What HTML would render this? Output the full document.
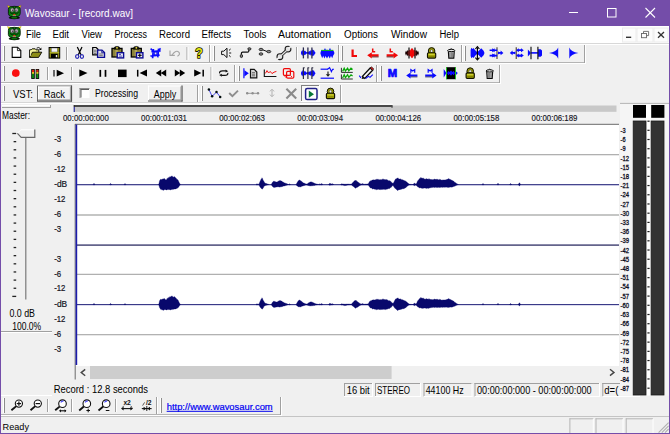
<!DOCTYPE html>
<html><head><meta charset="utf-8"><title>Wavosaur - [record.wav]</title>
<style>html,body{margin:0;padding:0;background:#f0f0f0;overflow:hidden}svg{display:block}text{font-family:"Liberation Sans",sans-serif;white-space:pre}</style></head>
<body>
<svg width="670" height="434" viewBox="0 0 670 434">
<rect x="0" y="0" width="670" height="434" fill="#744da9" />
<rect x="1" y="26" width="668" height="407" fill="#f0f0f0" />
<text x="25" y="16.5" font-size="10.1" fill="#fff" text-anchor="start" font-weight="normal" textLength="108" lengthAdjust="spacingAndGlyphs" >Wavosaur - [record.wav]</text>
<line x1="569" y1="12.5" x2="578" y2="12.5" stroke="#fff" stroke-width="1" />
<rect x="607.5" y="8.5" width="8.5" height="8.5" fill="none" stroke="#fff" stroke-width="1"/>
<line x1="645.5" y1="8" x2="655" y2="17.5" stroke="#fff" stroke-width="1.1" />
<line x1="655" y1="8" x2="645.5" y2="17.5" stroke="#fff" stroke-width="1.1" />
<rect x="1" y="26" width="668" height="17" fill="#fff" />
<line x1="1" y1="43.5" x2="669" y2="43.5" stroke="#d8d8d8" stroke-width="1" />
<text x="26" y="37.7" font-size="10" fill="#000" text-anchor="start" font-weight="normal" textLength="15" lengthAdjust="spacingAndGlyphs" >File</text>
<text x="52.5" y="37.7" font-size="10" fill="#000" text-anchor="start" font-weight="normal" textLength="16.5" lengthAdjust="spacingAndGlyphs" >Edit</text>
<text x="81.5" y="37.7" font-size="10" fill="#000" text-anchor="start" font-weight="normal" textLength="20.5" lengthAdjust="spacingAndGlyphs" >View</text>
<text x="114.5" y="37.7" font-size="10" fill="#000" text-anchor="start" font-weight="normal" textLength="32.5" lengthAdjust="spacingAndGlyphs" >Process</text>
<text x="159" y="37.7" font-size="10" fill="#000" text-anchor="start" font-weight="normal" textLength="31" lengthAdjust="spacingAndGlyphs" >Record</text>
<text x="201.5" y="37.7" font-size="10" fill="#000" text-anchor="start" font-weight="normal" textLength="29.5" lengthAdjust="spacingAndGlyphs" >Effects</text>
<text x="243.5" y="37.7" font-size="10" fill="#000" text-anchor="start" font-weight="normal" textLength="23" lengthAdjust="spacingAndGlyphs" >Tools</text>
<text x="278" y="37.7" font-size="10" fill="#000" text-anchor="start" font-weight="normal" textLength="53" lengthAdjust="spacingAndGlyphs" >Automation</text>
<text x="344" y="37.7" font-size="10" fill="#000" text-anchor="start" font-weight="normal" textLength="34" lengthAdjust="spacingAndGlyphs" >Options</text>
<text x="391" y="37.7" font-size="10" fill="#000" text-anchor="start" font-weight="normal" textLength="36" lengthAdjust="spacingAndGlyphs" >Window</text>
<text x="439.5" y="37.7" font-size="10" fill="#000" text-anchor="start" font-weight="normal" textLength="19.5" lengthAdjust="spacingAndGlyphs" >Help</text>
<rect x="622.5" y="28" width="13.5" height="14" fill="#fcfcfc" stroke="#ececec" stroke-width="1"/>
<rect x="637" y="28" width="16" height="14" fill="#fcfcfc" stroke="#ececec" stroke-width="1"/>
<rect x="654" y="28" width="14" height="14" fill="#fcfcfc" stroke="#ececec" stroke-width="1"/>
<line x1="626" y1="37.3" x2="631.2" y2="37.3" stroke="#333" stroke-width="1.4" />
<rect x="641.5" y="33.5" width="5" height="4.2" fill="none" stroke="#666" stroke-width=".9"/>
<path d="M643.5 33.3V31.4H648.6V35.6H646.8" fill="none" stroke="#666" stroke-width=".9"/>
<line x1="658" y1="32" x2="664" y2="37.8" stroke="#333" stroke-width="1.3" />
<line x1="664" y1="32" x2="658" y2="37.8" stroke="#333" stroke-width="1.3" />
<line x1="1" y1="44.5" x2="669" y2="44.5" stroke="#fff" stroke-width="1" />
<line x1="1" y1="62.5" x2="210" y2="62.5" stroke="#b4b4b4" stroke-width="1" />
<line x1="1" y1="63.5" x2="211" y2="63.5" stroke="#fff" stroke-width="1" />
<line x1="209.5" y1="45" x2="209.5" y2="63" stroke="#a0a0a0" stroke-width="1" />
<line x1="210.5" y1="45" x2="210.5" y2="63" stroke="#fff" stroke-width="1" />
<line x1="3.5" y1="46" x2="3.5" y2="61" stroke="#fff" stroke-width="1" />
<line x1="4.5" y1="46" x2="4.5" y2="61" stroke="#8c8c8c" stroke-width="1" />
<line x1="1" y1="62.5" x2="339" y2="62.5" stroke="#b4b4b4" stroke-width="1" />
<line x1="1" y1="63.5" x2="340" y2="63.5" stroke="#fff" stroke-width="1" />
<line x1="338.5" y1="45" x2="338.5" y2="63" stroke="#a0a0a0" stroke-width="1" />
<line x1="339.5" y1="45" x2="339.5" y2="63" stroke="#fff" stroke-width="1" />
<line x1="213.5" y1="46" x2="213.5" y2="61" stroke="#fff" stroke-width="1" />
<line x1="214.5" y1="46" x2="214.5" y2="61" stroke="#8c8c8c" stroke-width="1" />
<line x1="1" y1="62.5" x2="462" y2="62.5" stroke="#b4b4b4" stroke-width="1" />
<line x1="1" y1="63.5" x2="463" y2="63.5" stroke="#fff" stroke-width="1" />
<line x1="461.5" y1="45" x2="461.5" y2="63" stroke="#a0a0a0" stroke-width="1" />
<line x1="462.5" y1="45" x2="462.5" y2="63" stroke="#fff" stroke-width="1" />
<line x1="341.5" y1="46" x2="341.5" y2="61" stroke="#fff" stroke-width="1" />
<line x1="342.5" y1="46" x2="342.5" y2="61" stroke="#8c8c8c" stroke-width="1" />
<line x1="1" y1="62.5" x2="585" y2="62.5" stroke="#b4b4b4" stroke-width="1" />
<line x1="1" y1="63.5" x2="586" y2="63.5" stroke="#fff" stroke-width="1" />
<line x1="584.5" y1="45" x2="584.5" y2="63" stroke="#a0a0a0" stroke-width="1" />
<line x1="585.5" y1="45" x2="585.5" y2="63" stroke="#fff" stroke-width="1" />
<line x1="464.5" y1="46" x2="464.5" y2="61" stroke="#fff" stroke-width="1" />
<line x1="465.5" y1="46" x2="465.5" y2="61" stroke="#8c8c8c" stroke-width="1" />
<line x1="66.5" y1="47" x2="66.5" y2="60" stroke="#a0a0a0" stroke-width="1" />
<line x1="67.5" y1="47" x2="67.5" y2="60" stroke="#fff" stroke-width="1" />
<line x1="187" y1="47" x2="187" y2="60" stroke="#a0a0a0" stroke-width="1" />
<line x1="188" y1="47" x2="188" y2="60" stroke="#fff" stroke-width="1" />
<line x1="296.5" y1="47" x2="296.5" y2="60" stroke="#a0a0a0" stroke-width="1" />
<line x1="297.5" y1="47" x2="297.5" y2="60" stroke="#fff" stroke-width="1" />
<line x1="1" y1="82.5" x2="235" y2="82.5" stroke="#b4b4b4" stroke-width="1" />
<line x1="1" y1="83.5" x2="236" y2="83.5" stroke="#fff" stroke-width="1" />
<line x1="234.5" y1="65" x2="234.5" y2="83" stroke="#a0a0a0" stroke-width="1" />
<line x1="235.5" y1="65" x2="235.5" y2="83" stroke="#fff" stroke-width="1" />
<line x1="3.5" y1="66" x2="3.5" y2="81" stroke="#fff" stroke-width="1" />
<line x1="4.5" y1="66" x2="4.5" y2="81" stroke="#8c8c8c" stroke-width="1" />
<line x1="1" y1="82.5" x2="377" y2="82.5" stroke="#b4b4b4" stroke-width="1" />
<line x1="1" y1="83.5" x2="378" y2="83.5" stroke="#fff" stroke-width="1" />
<line x1="376.5" y1="65" x2="376.5" y2="83" stroke="#a0a0a0" stroke-width="1" />
<line x1="377.5" y1="65" x2="377.5" y2="83" stroke="#fff" stroke-width="1" />
<line x1="238.5" y1="66" x2="238.5" y2="81" stroke="#fff" stroke-width="1" />
<line x1="239.5" y1="66" x2="239.5" y2="81" stroke="#8c8c8c" stroke-width="1" />
<line x1="1" y1="82.5" x2="500" y2="82.5" stroke="#b4b4b4" stroke-width="1" />
<line x1="1" y1="83.5" x2="501" y2="83.5" stroke="#fff" stroke-width="1" />
<line x1="499.5" y1="65" x2="499.5" y2="83" stroke="#a0a0a0" stroke-width="1" />
<line x1="500.5" y1="65" x2="500.5" y2="83" stroke="#fff" stroke-width="1" />
<line x1="380.5" y1="66" x2="380.5" y2="81" stroke="#fff" stroke-width="1" />
<line x1="381.5" y1="66" x2="381.5" y2="81" stroke="#8c8c8c" stroke-width="1" />
<line x1="47.5" y1="67" x2="47.5" y2="80" stroke="#a0a0a0" stroke-width="1" />
<line x1="48.5" y1="67" x2="48.5" y2="80" stroke="#fff" stroke-width="1" />
<line x1="71.5" y1="67" x2="71.5" y2="80" stroke="#a0a0a0" stroke-width="1" />
<line x1="72.5" y1="67" x2="72.5" y2="80" stroke="#fff" stroke-width="1" />
<line x1="211" y1="67" x2="211" y2="80" stroke="#a0a0a0" stroke-width="1" />
<line x1="212" y1="67" x2="212" y2="80" stroke="#fff" stroke-width="1" />
<line x1="1" y1="102.5" x2="198" y2="102.5" stroke="#d6d6d6" stroke-width="1" />
<line x1="1" y1="103.5" x2="199" y2="103.5" stroke="#fff" stroke-width="1" />
<line x1="197.5" y1="85" x2="197.5" y2="103" stroke="#a0a0a0" stroke-width="1" />
<line x1="198.5" y1="85" x2="198.5" y2="103" stroke="#fff" stroke-width="1" />
<line x1="3.5" y1="86" x2="3.5" y2="101" stroke="#fff" stroke-width="1" />
<line x1="4.5" y1="86" x2="4.5" y2="101" stroke="#8c8c8c" stroke-width="1" />
<line x1="1" y1="102.5" x2="341" y2="102.5" stroke="#d6d6d6" stroke-width="1" />
<line x1="1" y1="103.5" x2="342" y2="103.5" stroke="#fff" stroke-width="1" />
<line x1="340.5" y1="85" x2="340.5" y2="103" stroke="#a0a0a0" stroke-width="1" />
<line x1="341.5" y1="85" x2="341.5" y2="103" stroke="#fff" stroke-width="1" />
<line x1="201.5" y1="86" x2="201.5" y2="101" stroke="#fff" stroke-width="1" />
<line x1="202.5" y1="86" x2="202.5" y2="101" stroke="#8c8c8c" stroke-width="1" />
<text x="13" y="97.7" font-size="10" fill="#000" text-anchor="start" font-weight="normal" textLength="20" lengthAdjust="spacingAndGlyphs" >VST:</text>
<rect x="37" y="85.5" width="35" height="16" fill="#f0f0f0" />
<rect x="37.5" y="86" width="34" height="15" fill="#f2f2f2" stroke="#6c6c6c" stroke-width="1"/>
<line x1="38" y1="87" x2="71" y2="87" stroke="#fff" stroke-width="1" />
<line x1="38.5" y1="86.5" x2="38.5" y2="100.5" stroke="#fff" stroke-width="1" />
<line x1="37" y1="101" x2="72" y2="101" stroke="#505050" stroke-width="1.2" />
<line x1="71.5" y1="85.5" x2="71.5" y2="101.5" stroke="#505050" stroke-width="1.2" />
<line x1="38" y1="99.9" x2="71" y2="99.9" stroke="#a0a0a0" stroke-width="1" />
<line x1="70.4" y1="86.5" x2="70.4" y2="100.5" stroke="#a0a0a0" stroke-width="1" />
<text x="43.8" y="97.5" font-size="10" fill="#000" text-anchor="start" font-weight="normal" textLength="21.2" lengthAdjust="spacingAndGlyphs" >Rack</text>
<rect x="79.5" y="88" width="10" height="10" fill="#fff" />
<line x1="79.5" y1="88.5" x2="89.5" y2="88.5" stroke="#8c8c8c" stroke-width="1" />
<line x1="80" y1="88" x2="80" y2="98" stroke="#8c8c8c" stroke-width="1" />
<line x1="80.5" y1="89.5" x2="89" y2="89.5" stroke="#5c5c5c" stroke-width="1" />
<line x1="81" y1="89" x2="81" y2="97.5" stroke="#5c5c5c" stroke-width="1" />
<text x="95" y="97.4" font-size="10" fill="#000" text-anchor="start" font-weight="normal" textLength="43" lengthAdjust="spacingAndGlyphs" >Processing</text>
<rect x="148" y="85.5" width="34.5" height="16" fill="#f0f0f0" />
<line x1="148" y1="86" x2="182.5" y2="86" stroke="#fff" stroke-width="1" />
<line x1="148.5" y1="85.5" x2="148.5" y2="101.5" stroke="#fff" stroke-width="1" />
<line x1="148" y1="101" x2="182.5" y2="101" stroke="#505050" stroke-width="1.2" />
<line x1="182" y1="85.5" x2="182" y2="101.5" stroke="#505050" stroke-width="1.2" />
<line x1="149" y1="99.9" x2="181.5" y2="99.9" stroke="#a0a0a0" stroke-width="1" />
<line x1="180.9" y1="86.5" x2="180.9" y2="100.5" stroke="#a0a0a0" stroke-width="1" />
<text x="153.8" y="97.5" font-size="10" fill="#000" text-anchor="start" font-weight="normal" textLength="22.4" lengthAdjust="spacingAndGlyphs" >Apply</text>
<rect x="301" y="85" width="19" height="17" fill="#f8f8f8" />
<line x1="301" y1="85.5" x2="320" y2="85.5" stroke="#808080" stroke-width="1" />
<line x1="301.5" y1="85" x2="301.5" y2="102" stroke="#808080" stroke-width="1" />
<line x1="301" y1="101.5" x2="320" y2="101.5" stroke="#fff" stroke-width="1" />
<line x1="319.5" y1="85" x2="319.5" y2="102" stroke="#fff" stroke-width="1" />
<line x1="2" y1="105.5" x2="50.5" y2="105.5" stroke="#fff" stroke-width="1" />
<line x1="2" y1="107.5" x2="50.5" y2="107.5" stroke="#a0a0a0" stroke-width="1" />
<line x1="50.5" y1="105" x2="50.5" y2="108" stroke="#a0a0a0" stroke-width="1" />
<text x="2" y="118.7" font-size="10" fill="#000" text-anchor="start" font-weight="normal" textLength="28" lengthAdjust="spacingAndGlyphs" >Master:</text>
<line x1="25.8" y1="137" x2="25.8" y2="299.5" stroke="#7a7a7a" stroke-width="1.2" />
<line x1="12.3" y1="133.5" x2="16.2" y2="133.5" stroke="#222" stroke-width="1.3" />
<line x1="13.6" y1="141.645" x2="16.2" y2="141.645" stroke="#222" stroke-width="1.3" />
<line x1="13.6" y1="149.79" x2="16.2" y2="149.79" stroke="#222" stroke-width="1.3" />
<line x1="13.6" y1="157.935" x2="16.2" y2="157.935" stroke="#222" stroke-width="1.3" />
<line x1="13.6" y1="166.08" x2="16.2" y2="166.08" stroke="#222" stroke-width="1.3" />
<line x1="13.6" y1="174.225" x2="16.2" y2="174.225" stroke="#222" stroke-width="1.3" />
<line x1="13.6" y1="182.37" x2="16.2" y2="182.37" stroke="#222" stroke-width="1.3" />
<line x1="13.6" y1="190.515" x2="16.2" y2="190.515" stroke="#222" stroke-width="1.3" />
<line x1="13.6" y1="198.66" x2="16.2" y2="198.66" stroke="#222" stroke-width="1.3" />
<line x1="13.6" y1="206.805" x2="16.2" y2="206.805" stroke="#222" stroke-width="1.3" />
<line x1="13.6" y1="214.95" x2="16.2" y2="214.95" stroke="#222" stroke-width="1.3" />
<line x1="13.6" y1="223.095" x2="16.2" y2="223.095" stroke="#222" stroke-width="1.3" />
<line x1="13.6" y1="231.24" x2="16.2" y2="231.24" stroke="#222" stroke-width="1.3" />
<line x1="13.6" y1="239.385" x2="16.2" y2="239.385" stroke="#222" stroke-width="1.3" />
<line x1="13.6" y1="247.53" x2="16.2" y2="247.53" stroke="#222" stroke-width="1.3" />
<line x1="13.6" y1="255.675" x2="16.2" y2="255.675" stroke="#222" stroke-width="1.3" />
<line x1="13.6" y1="263.82" x2="16.2" y2="263.82" stroke="#222" stroke-width="1.3" />
<line x1="13.6" y1="271.965" x2="16.2" y2="271.965" stroke="#222" stroke-width="1.3" />
<line x1="13.6" y1="280.11" x2="16.2" y2="280.11" stroke="#222" stroke-width="1.3" />
<line x1="13.6" y1="288.255" x2="16.2" y2="288.255" stroke="#222" stroke-width="1.3" />
<line x1="12.3" y1="296.4" x2="16.2" y2="296.4" stroke="#222" stroke-width="1.3" />
<path d="M17.2 133.2L21 129.6H34.8V137.4H21Z" fill="#f0f0f0"/>
<path d="M17.4 133.2L21 129.8H34" fill="none" stroke="#fff" stroke-width="1"/>
<path d="M17.4 133.4L21.2 137.3H34.8V129.4" fill="none" stroke="#666" stroke-width="1.2"/>
<text x="9.4" y="317.4" font-size="10.1" fill="#000" text-anchor="start" font-weight="normal" textLength="25.6" lengthAdjust="spacingAndGlyphs" >0.0 dB</text>
<text x="12.2" y="329.6" font-size="10.1" fill="#000" text-anchor="start" font-weight="normal" textLength="29" lengthAdjust="spacingAndGlyphs" >100.0%</text>
<line x1="1" y1="331.5" x2="52" y2="331.5" stroke="#a0a0a0" stroke-width="1" />
<line x1="1" y1="332.5" x2="52" y2="332.5" stroke="#fff" stroke-width="1" />
<rect x="74" y="105.5" width="542.5" height="6.3" fill="#c8c8c8" />
<line x1="74" y1="104.3" x2="392.7" y2="104.3" stroke="#fbfbfb" stroke-width="1.5" />
<line x1="74" y1="106" x2="392.5" y2="106" stroke="#484848" stroke-width="1.9" />
<line x1="74.3" y1="105" x2="74.3" y2="107" stroke="#333" stroke-width="1.4" />
<line x1="74.3" y1="107" x2="74.3" y2="112" stroke="#4444a4" stroke-width="1.4" />
<line x1="392" y1="105.5" x2="392" y2="108" stroke="#4a4a4a" stroke-width="1" />
<text x="63" y="121.4" font-size="8.9" fill="#16161e" text-anchor="start" font-weight="normal" textLength="45.8" lengthAdjust="spacingAndGlyphs" stroke="#16161e" stroke-width=".15">00:00:00:000</text>
<text x="141.1" y="121.4" font-size="8.9" fill="#16161e" text-anchor="start" font-weight="normal" textLength="45.8" lengthAdjust="spacingAndGlyphs" stroke="#16161e" stroke-width=".15">00:00:01:031</text>
<text x="219.2" y="121.4" font-size="8.9" fill="#16161e" text-anchor="start" font-weight="normal" textLength="45.8" lengthAdjust="spacingAndGlyphs" stroke="#16161e" stroke-width=".15">00:00:02:063</text>
<text x="297.3" y="121.4" font-size="8.9" fill="#16161e" text-anchor="start" font-weight="normal" textLength="45.8" lengthAdjust="spacingAndGlyphs" stroke="#16161e" stroke-width=".15">00:00:03:094</text>
<text x="375.4" y="121.4" font-size="8.9" fill="#16161e" text-anchor="start" font-weight="normal" textLength="45.8" lengthAdjust="spacingAndGlyphs" stroke="#16161e" stroke-width=".15">00:00:04:126</text>
<text x="453.5" y="121.4" font-size="8.9" fill="#16161e" text-anchor="start" font-weight="normal" textLength="45.8" lengthAdjust="spacingAndGlyphs" stroke="#16161e" stroke-width=".15">00:00:05:158</text>
<text x="531.6" y="121.4" font-size="8.9" fill="#16161e" text-anchor="start" font-weight="normal" textLength="45.8" lengthAdjust="spacingAndGlyphs" stroke="#16161e" stroke-width=".15">00:00:06:189</text>
<rect x="75" y="124" width="544" height="242" fill="#fff" />
<line x1="75" y1="124.4" x2="619" y2="124.4" stroke="#868686" stroke-width="1.2" />
<line x1="75.2" y1="124" x2="75.2" y2="379.5" stroke="#6a6a6a" stroke-width="1" />
<line x1="77" y1="154.5" x2="619" y2="154.5" stroke="#b0b0b0" stroke-width="1" />
<line x1="77" y1="155.5" x2="619" y2="155.5" stroke="#e8e8e8" stroke-width="1" />
<line x1="77" y1="215" x2="619" y2="215" stroke="#c5c6c5" stroke-width="2" />
<line x1="77" y1="273.5" x2="619" y2="273.5" stroke="#ebebeb" stroke-width="1" />
<line x1="77" y1="274.5" x2="619" y2="274.5" stroke="#b0b0b0" stroke-width="1" />
<line x1="77" y1="334.5" x2="619" y2="334.5" stroke="#b2b2b2" stroke-width="1" />
<line x1="77" y1="335.5" x2="619" y2="335.5" stroke="#e8e8e8" stroke-width="1" />
<line x1="77" y1="244.5" x2="619" y2="244.5" stroke="#8a8aaa" stroke-width="1" />
<line x1="77" y1="245.5" x2="619" y2="245.5" stroke="#64648a" stroke-width="1" />
<line x1="77" y1="184.5" x2="619" y2="184.5" stroke="#46468e" stroke-width="1"/><line x1="77" y1="185.5" x2="619" y2="185.5" stroke="#c6c6e2" stroke-width="1"/><path d="M93 184.5L93.5 183.9L94 183.3L94.5 183.9L95 184.5L95 184.5L94.5 184.7L94 184.8L93.5 184.7L93 184.5ZM109.5 184.5L110 184L110.5 183.4L111 183.8L111.5 184.4L112 184.5L112 184.5L111.5 184.5L111 184.7L110.5 184.8L110 184.6L109.5 184.5ZM124 184.5L124.5 184L125 183.5L125.5 184L126 184.5L126 184.5L125.5 184.7L125 184.8L124.5 184.7L124 184.5ZM158.5 184.5L159 183.4L159.5 181.1L160 180L160.5 179.3L161 179.6L161.5 179.5L162 179.3L162.5 179L163 179.2L163.5 178.7L164 178.8L164.5 178.6L165 179L165.5 179.8L166 179.9L166.5 179.7L167 178.4L167.5 178.2L168 178.4L168.5 177.4L169 177.6L169.5 177.2L170 176.5L170.5 177.1L171 176.6L171.5 176.3L172 175.8L172.5 176.6L173 177.1L173.5 177.3L174 176.5L174.5 176.7L175 177.2L175.5 177.7L176 177.9L176.5 178.7L177 179.5L177.5 179.6L178 180.1L178.5 181.1L179 182.3L179.5 183.1L180 183.9L180.5 184.5L180.5 184.5L180 185.1L179.5 185.8L179 186.4L178.5 187.3L178 187.5L177.5 188.2L177 188.3L176.5 188.5L176 189L175.5 188.9L175 189.1L174.5 188.9L174 189.2L173.5 189.3L173 189.3L172.5 189.6L172 189.2L171.5 189.4L171 190L170.5 189.8L170 190.1L169.5 189.6L169 189.8L168.5 189.6L168 189.6L167.5 189.6L167 190L166.5 189.9L166 190L165.5 189.5L165 189.7L164.5 189.6L164 190L163.5 190.4L163 189.7L162.5 190.2L162 189.5L161.5 189.6L161 189.5L160.5 189.2L160 188.3L159.5 187.6L159 185.6L158.5 184.5ZM256 184.5L256.5 184.1L257 183.7L257.5 184.1L258 184.5L258 184.5L257.5 184.8L257 185.1L256.5 184.8L256 184.5ZM258 184.5L258.5 184.2L259 183.9L259.5 182.7L260 181.5L260.5 180.4L261 179.2L261.5 178.9L262 177.7L262.5 178.4L263 179.9L263.5 180.8L264 181.6L264.5 182.5L265 183L265.5 183.3L266 183.5L266.5 183.6L267 183.8L267.5 184L268 184.2L268.5 184.3L269 184.5L269 184.5L268.5 184.6L268 184.8L267.5 184.9L267 185L266.5 185.2L266 185.3L265.5 185.5L265 185.8L264.5 186L264 186.3L263.5 187.6L263 188.3L262.5 188.9L262 189.2L261.5 188.4L261 188.2L260.5 187.4L260 187.1L259.5 185.9L259 185.1L258.5 184.8L258 184.5ZM271 184.5L271.5 184.2L272 183.1L272.5 182.2L273 181.9L273.5 181.2L274 181L274.5 181.4L275 181.5L275.5 181.7L276 182.1L276.5 182L277 181.9L277.5 181.7L278 181.4L278.5 181L279 180.9L279.5 180.6L280 180.8L280.5 180.6L281 181L281.5 181.1L282 181.2L282.5 181.7L283 182.2L283.5 182.3L284 182.4L284.5 182.9L285 183L285.5 183.2L286 183.4L286.5 183.6L287 183.8L287.5 184L288 184.3L288.5 184.5L288.5 184.5L288 184.7L287.5 184.9L287 185.1L286.5 185.2L286 185.4L285.5 185.6L285 185.7L284.5 185.9L284 185.9L283.5 186.1L283 186.2L282.5 186.5L282 186.8L281.5 186.7L281 186.8L280.5 186.8L280 187.2L279.5 187L279 186.9L278.5 186.8L278 186.9L277.5 186.8L277 187.1L276.5 187L276 187.1L275.5 187.3L275 187.2L274.5 187.4L274 187.5L273.5 187.3L273 186.9L272.5 186.4L272 185.9L271.5 184.7L271 184.5ZM288.5 184.5L289 184.2L289.5 183.8L290 184.2L290.5 184.5L290.5 184.5L290 184.7L289.5 184.8L289 184.7L288.5 184.5ZM296 184.5L296.5 183.7L297 182.8L297.5 182.1L298 181.2L298.5 180.7L299 179.9L299.5 180.1L300 180.5L300.5 180.6L301 181.1L301.5 181.3L302 181.7L302.5 182.1L303 182.7L303.5 183L304 183.1L304.5 183.3L305 183.6L305.5 183.8L306 183.9L306.5 183.9L307 184L307.5 183.7L308 183.3L308.5 182.9L309 182.6L309.5 182.4L310 182.1L310.5 182L311 181.8L311.5 181.9L312 182.2L312.5 182.3L313 182.6L313.5 182.8L314 183.1L314.5 183.3L315 183.5L315.5 183.7L316 183.8L316.5 184L317 184.1L317.5 184.2L318 184.3L318.5 184.4L319 184.5L319 184.5L318.5 184.6L318 184.7L317.5 184.7L317 184.8L316.5 184.9L316 185L315.5 185.1L315 185.2L314.5 185.4L314 185.5L313.5 185.6L313 185.6L312.5 185.7L312 185.7L311.5 185.8L311 185.8L310.5 185.9L310 185.8L309.5 185.8L309 185.7L308.5 185.5L308 185.4L307.5 185.2L307 185L306.5 185L306 185.1L305.5 185.1L305 185.2L304.5 185.4L304 185.6L303.5 185.7L303 185.9L302.5 186.1L302 186.3L301.5 186.6L301 186.5L300.5 186.9L300 186.9L299.5 186.8L299 186.8L298.5 186.9L298 186.4L297.5 186.1L297 185.9L296.5 185.2L296 184.5ZM319 184.5L319.5 183.8L320 183.9L320.5 184.2L321 184L321.5 183.6L322 183.8L322.5 184.2L323 184.5L323 184.5L322.5 184.6L322 184.8L321.5 184.9L321 184.8L320.5 184.7L320 184.8L319.5 184.8L319 184.5ZM328.5 184.5L329 184L329.5 183.4L330 183.2L330.5 183.6L331 184.1L331.5 183.9L332 183.7L332.5 183.7L333 184.1L333.5 184.4L334 184.5L334 184.5L333.5 184.5L333 184.7L332.5 184.8L332 184.8L331.5 184.9L331 184.9L330.5 185.1L330 185.3L329.5 185.2L329 184.8L328.5 184.5ZM340.5 184.5L341 184.2L341.5 183.8L342 183.9L342.5 183.9L343 184L343.5 184.1L344 184.1L344.5 184.2L345 184.2L345.5 184.2L346 184.2L346.5 184.2L347 184.1L347.5 184.1L348 184L348.5 184.1L349 184.1L349.5 184.2L350 184.2L350.5 184.2L351 184.1L351.5 184.1L352 183.5L352.5 182.8L353 182.3L353.5 181.9L354 181.2L354.5 180.7L355 180.5L355.5 180.6L356 180.3L356.5 180.7L357 181.4L357.5 181.7L358 181.9L358.5 182.5L359 182.8L359.5 183.2L360 183.5L360.5 183.8L361 184L361.5 183.9L362 183.8L362.5 183.6L363 183.8L363.5 184L364 184.2L364.5 184.2L365 184.2L365.5 184.1L366 184.1L366.5 184.1L367 184L367.5 184L368 183.8L368.5 183.4L369 182.6L369.5 181.6L370 181.5L370.5 180.7L371 180.8L371.5 180.8L372 179.9L372.5 180.1L373 180.1L373.5 179.7L374 180L374.5 179.9L375 179.8L375.5 179.8L376 179.5L376.5 179.3L377 179.4L377.5 179.3L378 179.2L378.5 179.4L379 179.8L379.5 179.8L380 179.4L380.5 179.7L381 179.4L381.5 179.7L382 179.5L382.5 179.1L383 179.4L383.5 179.1L384 179.4L384.5 179.5L385 179.6L385.5 179.7L386 179.5L386.5 179.5L387 179.9L387.5 179.8L388 180.5L388.5 180.7L389 180.8L389.5 180.6L390 181.2L390.5 181.2L391 181.5L391.5 182.2L392 182.7L392.5 183.1L393 183.6L393.5 182.7L394 182.1L394.5 180.8L395 180.1L395.5 179.1L396 178.7L396.5 178.9L397 177.9L397.5 178.3L398 177.8L398.5 178.7L399 179L399.5 179L400 179L400.5 178.8L401 179.6L401.5 179.4L402 179.9L402.5 179.6L403 180.2L403.5 180L404 180.6L404.5 180.8L405 180.8L405.5 181.1L406 181.5L406.5 181.7L407 182.3L407.5 182.8L408 183.1L408.5 183.5L409 183.9L409.5 184.1L410 184.2L410.5 184.3L411 184.3L411.5 184.4L412 184.4L412.5 184.5L413 184.3L413.5 184L414 183.4L414.5 183L415 183.6L415.5 183.9L416 183.7L416.5 183.4L417 182.5L417.5 181.1L418 180.5L418.5 179.9L419 179.3L419.5 178.6L420 178.8L420.5 177.7L421 177.4L421.5 177.9L422 178.2L422.5 178L423 178.5L423.5 178.2L424 178.6L424.5 179.1L425 179.2L425.5 179L426 179.2L426.5 178.5L427 179.1L427.5 179.1L428 179.3L428.5 179.2L429 178.6L429.5 179.3L430 179.3L430.5 179.6L431 179.2L431.5 179.5L432 179.7L432.5 179.6L433 179.7L433.5 179.5L434 179.2L434.5 179.1L435 179.2L435.5 179.5L436 179L436.5 179.2L437 179.8L437.5 179.2L438 179.3L438.5 179.9L439 179.6L439.5 179.4L440 179.6L440.5 179.6L441 180L441.5 180.1L442 180.2L442.5 179.9L443 179.9L443.5 180L444 179.8L444.5 180L445 180L445.5 179.8L446 180.1L446.5 179.5L447 179.3L447.5 179.3L448 179.1L448.5 178.7L449 178.6L449.5 179.4L450 179.1L450.5 179.6L451 180.2L451.5 180L452 180.3L452.5 180.6L453 181L453.5 181.1L454 181.4L454.5 182.2L455 182.2L455.5 182.7L456 183L456.5 183.4L457 183.7L457.5 184L458 184.4L458.5 184.5L458.5 184.5L458 184.6L457.5 184.8L457 185.1L456.5 185.3L456 185.6L455.5 185.8L455 186.1L454.5 186.2L454 186.6L453.5 186.5L453 186.7L452.5 187L452 187L451.5 187.2L451 187.1L450.5 187.1L450 187.2L449.5 187.2L449 187.2L448.5 187.4L448 187.4L447.5 187.3L447 187.5L446.5 187.1L446 187.2L445.5 187.2L445 187.1L444.5 187.3L444 187.4L443.5 187.1L443 187.4L442.5 187.3L442 187.4L441.5 187.2L441 187.1L440.5 187.4L440 187.5L439.5 187.4L439 187.4L438.5 187.3L438 187.4L437.5 187.4L437 187.5L436.5 187.4L436 187.2L435.5 187.3L435 187.5L434.5 187.4L434 187.4L433.5 187.3L433 187.2L432.5 187.5L432 187.5L431.5 187.6L431 187.7L430.5 187.7L430 187.7L429.5 188.1L429 188L428.5 188.4L428 188.2L427.5 188.3L427 188.1L426.5 188.4L426 188.4L425.5 188L425 188.3L424.5 187.9L424 188L423.5 188.2L423 188.2L422.5 188.4L422 188.1L421.5 188.3L421 188.1L420.5 187.8L420 187.9L419.5 187.9L419 187.5L418.5 187.2L418 187.1L417.5 186.8L417 186L416.5 185.4L416 185.2L415.5 185L415 185.3L414.5 185.8L414 185.5L413.5 184.9L413 184.7L412.5 184.5L412 184.6L411.5 184.6L411 184.6L410.5 184.7L410 184.7L409.5 184.8L409 184.9L408.5 185.3L408 185.7L407.5 186.1L407 186.5L406.5 186.9L406 187.2L405.5 187.9L405 187.9L404.5 188.4L404 188.6L403.5 188.7L403 189L402.5 188.8L402 188.7L401.5 189.3L401 189.6L400.5 189.2L400 189.9L399.5 189.4L399 190.1L398.5 189.7L398 190.4L397.5 190.5L397 189.9L396.5 189.4L396 189.3L395.5 188.5L395 188.4L394.5 187.7L394 186.9L393.5 186.2L393 185.3L392.5 185.8L392 186.3L391.5 187.1L391 187.5L390.5 187.5L390 188.3L389.5 188.6L389 188.6L388.5 188.5L388 188.9L387.5 188.7L387 189.4L386.5 188.9L386 189.5L385.5 189.6L385 189.3L384.5 189.4L384 189.3L383.5 189.3L383 189.6L382.5 189.4L382 189.2L381.5 189.5L381 189.7L380.5 189.6L380 189.6L379.5 189.5L379 189.8L378.5 189.3L378 189.1L377.5 189.5L377 189.7L376.5 189.7L376 189.3L375.5 189.6L375 189.1L374.5 189.2L374 188.9L373.5 188.7L373 189.1L372.5 189L372 188.6L371.5 188L371 188.1L370.5 187.9L370 187.5L369.5 187L369 186.1L368.5 185.3L368 185L367.5 184.9L367 184.9L366.5 184.8L366 184.8L365.5 184.8L365 184.8L364.5 184.8L364 184.8L363.5 184.8L363 184.8L362.5 184.8L362 184.8L361.5 184.9L361 184.9L360.5 185.2L360 185.5L359.5 185.8L359 186L358.5 186.5L358 186.7L357.5 187.2L357 187.5L356.5 187.6L356 188.1L355.5 188.2L355 187.9L354.5 187.3L354 187.2L353.5 186.5L353 186.2L352.5 186L352 185.3L351.5 184.8L351 184.8L350.5 184.7L350 184.7L349.5 184.8L349 184.8L348.5 184.8L348 184.9L347.5 185L347 185.2L346.5 185.3L346 185.4L345.5 185.5L345 185.5L344.5 185.6L344 185.4L343.5 185.2L343 185L342.5 185L342 185.1L341.5 185.1L341 184.8L340.5 184.5ZM482 184.5L482.5 183.9L483 183.4L483.5 183.9L484 184.5L484 184.5L483.5 184.7L483 184.8L482.5 184.7L482 184.5ZM497 184.5L497.5 183.8L498 183.2L498.5 183.8L499 184.5L499 184.5L498.5 184.7L498 184.8L497.5 184.7L497 184.5ZM509.5 184.5L510 184.1L510.5 183.5L511 183.8L511.5 184.4L512 184.5L512 184.5L511.5 184.5L511 184.7L510.5 184.8L510 184.6L509.5 184.5ZM518 184.5L518.5 184.3L519 183.2L519.5 182.7L520 183.6L520.5 184.5L520.5 184.5L520 185.2L519.5 186L519 185.6L518.5 184.7L518 184.5Z" fill="#08086c" stroke="#08086c" stroke-width="0.3" stroke-linejoin="round"/>
<line x1="77" y1="304.5" x2="619" y2="304.5" stroke="#3a3a88" stroke-width="1"/><line x1="77" y1="305.5" x2="619" y2="305.5" stroke="#dcdcee" stroke-width="1"/><path d="M93 304.5L93.5 303.9L94 303.3L94.5 303.9L95 304.5L95 304.5L94.5 304.6L94 304.8L93.5 304.6L93 304.5ZM109.5 304.5L110 304L110.5 303.4L111 303.8L111.5 304.4L112 304.5L112 304.5L111.5 304.5L111 304.7L110.5 304.8L110 304.6L109.5 304.5ZM124 304.5L124.5 304L125 303.5L125.5 304L126 304.5L126 304.5L125.5 304.6L125 304.8L124.5 304.6L124 304.5ZM158.5 304.5L159 303.4L159.5 301.1L160 300L160.5 299.3L161 299.6L161.5 299.5L162 299.3L162.5 299L163 299.2L163.5 298.7L164 298.8L164.5 298.6L165 299L165.5 299.8L166 299.9L166.5 299.7L167 298.4L167.5 298.2L168 298.4L168.5 297.4L169 297.6L169.5 297.2L170 296.5L170.5 297.1L171 296.6L171.5 296.3L172 295.8L172.5 296.6L173 297.1L173.5 297.3L174 296.5L174.5 296.7L175 297.2L175.5 297.7L176 297.9L176.5 298.7L177 299.5L177.5 299.6L178 300.1L178.5 301.1L179 302.3L179.5 303.1L180 303.9L180.5 304.5L180.5 304.5L180 305.1L179.5 305.8L179 306.4L178.5 307.3L178 307.5L177.5 308.2L177 308.3L176.5 308.5L176 309L175.5 308.9L175 309.1L174.5 308.9L174 309.2L173.5 309.3L173 309.3L172.5 309.6L172 309.2L171.5 309.4L171 310L170.5 309.8L170 310.1L169.5 309.6L169 309.8L168.5 309.6L168 309.6L167.5 309.6L167 310L166.5 309.9L166 310L165.5 309.5L165 309.7L164.5 309.6L164 310L163.5 310.4L163 309.7L162.5 310.2L162 309.5L161.5 309.6L161 309.5L160.5 309.2L160 308.3L159.5 307.6L159 305.6L158.5 304.5ZM256 304.5L256.5 304.1L257 303.7L257.5 304.1L258 304.5L258 304.5L257.5 304.8L257 305.1L256.5 304.8L256 304.5ZM258 304.5L258.5 304.2L259 303.9L259.5 302.7L260 301.5L260.5 300.4L261 299.2L261.5 298.9L262 297.7L262.5 298.4L263 299.9L263.5 300.8L264 301.6L264.5 302.5L265 303L265.5 303.3L266 303.5L266.5 303.6L267 303.8L267.5 304L268 304.1L268.5 304.3L269 304.5L269 304.5L268.5 304.6L268 304.8L267.5 304.9L267 305L266.5 305.2L266 305.3L265.5 305.5L265 305.8L264.5 306L264 306.3L263.5 307.6L263 308.3L262.5 308.9L262 309.2L261.5 308.4L261 308.2L260.5 307.4L260 307.1L259.5 305.9L259 305.1L258.5 304.8L258 304.5ZM271 304.5L271.5 304.2L272 303.1L272.5 302.2L273 301.9L273.5 301.2L274 301L274.5 301.4L275 301.5L275.5 301.7L276 302.1L276.5 302L277 301.9L277.5 301.7L278 301.4L278.5 301L279 300.9L279.5 300.6L280 300.8L280.5 300.6L281 301L281.5 301.1L282 301.2L282.5 301.7L283 302.2L283.5 302.3L284 302.4L284.5 302.9L285 303L285.5 303.2L286 303.4L286.5 303.6L287 303.8L287.5 304L288 304.3L288.5 304.5L288.5 304.5L288 304.7L287.5 304.9L287 305.1L286.5 305.2L286 305.4L285.5 305.6L285 305.7L284.5 305.9L284 305.9L283.5 306.1L283 306.2L282.5 306.5L282 306.8L281.5 306.7L281 306.8L280.5 306.8L280 307.2L279.5 307L279 306.9L278.5 306.8L278 306.9L277.5 306.8L277 307.1L276.5 307L276 307.1L275.5 307.3L275 307.2L274.5 307.4L274 307.5L273.5 307.3L273 306.9L272.5 306.4L272 305.9L271.5 304.7L271 304.5ZM288.5 304.5L289 304.1L289.5 303.8L290 304.1L290.5 304.5L290.5 304.5L290 304.6L289.5 304.8L289 304.6L288.5 304.5ZM296 304.5L296.5 303.7L297 302.8L297.5 302.1L298 301.2L298.5 300.7L299 299.9L299.5 300.1L300 300.5L300.5 300.6L301 301.1L301.5 301.3L302 301.7L302.5 302.1L303 302.7L303.5 303L304 303.1L304.5 303.4L305 303.6L305.5 303.8L306 303.9L306.5 303.9L307 304L307.5 303.7L308 303.3L308.5 302.9L309 302.6L309.5 302.4L310 302.1L310.5 302L311 301.8L311.5 301.9L312 302.2L312.5 302.3L313 302.6L313.5 302.8L314 303.1L314.5 303.3L315 303.5L315.5 303.7L316 303.8L316.5 304L317 304.1L317.5 304.2L318 304.3L318.5 304.4L319 304.5L319 304.5L318.5 304.6L318 304.6L317.5 304.7L317 304.8L316.5 304.9L316 305L315.5 305.1L315 305.2L314.5 305.4L314 305.5L313.5 305.6L313 305.6L312.5 305.7L312 305.7L311.5 305.8L311 305.8L310.5 305.9L310 305.8L309.5 305.8L309 305.7L308.5 305.5L308 305.4L307.5 305.2L307 305L306.5 305L306 305.1L305.5 305.1L305 305.2L304.5 305.4L304 305.6L303.5 305.7L303 305.9L302.5 306.1L302 306.3L301.5 306.6L301 306.5L300.5 306.9L300 306.9L299.5 306.8L299 306.8L298.5 306.9L298 306.4L297.5 306.1L297 305.9L296.5 305.2L296 304.5ZM319 304.5L319.5 303.8L320 303.9L320.5 304.2L321 304L321.5 303.6L322 303.8L322.5 304.2L323 304.5L323 304.5L322.5 304.6L322 304.8L321.5 304.9L321 304.8L320.5 304.7L320 304.8L319.5 304.8L319 304.5ZM328.5 304.5L329 304L329.5 303.4L330 303.2L330.5 303.6L331 304.1L331.5 303.9L332 303.7L332.5 303.7L333 304.1L333.5 304.4L334 304.5L334 304.5L333.5 304.5L333 304.6L332.5 304.8L332 304.8L331.5 304.9L331 304.9L330.5 305.1L330 305.3L329.5 305.2L329 304.8L328.5 304.5ZM340.5 304.5L341 304.1L341.5 303.8L342 303.9L342.5 303.9L343 304L343.5 304.1L344 304.1L344.5 304.2L345 304.2L345.5 304.2L346 304.2L346.5 304.1L347 304.1L347.5 304.1L348 304L348.5 304.1L349 304.1L349.5 304.1L350 304.2L350.5 304.2L351 304.1L351.5 304.1L352 303.5L352.5 302.8L353 302.3L353.5 301.9L354 301.2L354.5 300.7L355 300.5L355.5 300.6L356 300.3L356.5 300.7L357 301.4L357.5 301.7L358 301.9L358.5 302.5L359 302.8L359.5 303.2L360 303.5L360.5 303.8L361 304L361.5 303.9L362 303.8L362.5 303.6L363 303.8L363.5 304L364 304.2L364.5 304.2L365 304.1L365.5 304.1L366 304.1L366.5 304.1L367 304L367.5 304L368 303.8L368.5 303.4L369 302.6L369.5 301.6L370 301.5L370.5 300.7L371 300.8L371.5 300.8L372 299.9L372.5 300.1L373 300.1L373.5 299.7L374 300L374.5 299.9L375 299.8L375.5 299.8L376 299.5L376.5 299.3L377 299.4L377.5 299.3L378 299.2L378.5 299.4L379 299.8L379.5 299.8L380 299.4L380.5 299.7L381 299.4L381.5 299.7L382 299.5L382.5 299.1L383 299.4L383.5 299.1L384 299.4L384.5 299.5L385 299.6L385.5 299.7L386 299.5L386.5 299.5L387 299.9L387.5 299.8L388 300.5L388.5 300.7L389 300.8L389.5 300.6L390 301.2L390.5 301.2L391 301.5L391.5 302.2L392 302.7L392.5 303.1L393 303.6L393.5 302.7L394 302.1L394.5 300.8L395 300.1L395.5 299.1L396 298.7L396.5 298.9L397 297.9L397.5 298.3L398 297.8L398.5 298.7L399 299L399.5 299L400 299L400.5 298.8L401 299.6L401.5 299.4L402 299.9L402.5 299.6L403 300.2L403.5 300L404 300.6L404.5 300.8L405 300.8L405.5 301.1L406 301.5L406.5 301.7L407 302.3L407.5 302.8L408 303.1L408.5 303.5L409 303.9L409.5 304.1L410 304.2L410.5 304.3L411 304.3L411.5 304.4L412 304.4L412.5 304.5L413 304.3L413.5 304L414 303.4L414.5 303L415 303.6L415.5 303.9L416 303.6L416.5 303.4L417 302.5L417.5 301.1L418 300.5L418.5 299.9L419 299.3L419.5 298.6L420 298.8L420.5 297.7L421 297.4L421.5 297.9L422 298.2L422.5 298L423 298.5L423.5 298.2L424 298.6L424.5 299.1L425 299.2L425.5 299L426 299.2L426.5 298.5L427 299.1L427.5 299.1L428 299.3L428.5 299.2L429 298.6L429.5 299.3L430 299.3L430.5 299.6L431 299.2L431.5 299.5L432 299.7L432.5 299.6L433 299.7L433.5 299.5L434 299.2L434.5 299.1L435 299.2L435.5 299.5L436 299L436.5 299.2L437 299.8L437.5 299.2L438 299.3L438.5 299.9L439 299.6L439.5 299.4L440 299.6L440.5 299.6L441 300L441.5 300.1L442 300.2L442.5 299.9L443 299.9L443.5 300L444 299.8L444.5 300L445 300L445.5 299.8L446 300.1L446.5 299.5L447 299.3L447.5 299.3L448 299.1L448.5 298.7L449 298.6L449.5 299.4L450 299.1L450.5 299.6L451 300.2L451.5 300L452 300.3L452.5 300.6L453 301L453.5 301.1L454 301.4L454.5 302.2L455 302.2L455.5 302.7L456 303L456.5 303.4L457 303.7L457.5 304L458 304.4L458.5 304.5L458.5 304.5L458 304.6L457.5 304.8L457 305.1L456.5 305.3L456 305.6L455.5 305.8L455 306.1L454.5 306.2L454 306.6L453.5 306.5L453 306.7L452.5 307L452 307L451.5 307.2L451 307.1L450.5 307.1L450 307.2L449.5 307.2L449 307.2L448.5 307.4L448 307.4L447.5 307.3L447 307.5L446.5 307.1L446 307.2L445.5 307.2L445 307.1L444.5 307.3L444 307.4L443.5 307.1L443 307.4L442.5 307.3L442 307.4L441.5 307.2L441 307.1L440.5 307.4L440 307.5L439.5 307.4L439 307.4L438.5 307.3L438 307.4L437.5 307.4L437 307.5L436.5 307.4L436 307.2L435.5 307.3L435 307.5L434.5 307.4L434 307.4L433.5 307.3L433 307.2L432.5 307.5L432 307.5L431.5 307.6L431 307.7L430.5 307.7L430 307.7L429.5 308.1L429 308L428.5 308.4L428 308.2L427.5 308.3L427 308.1L426.5 308.4L426 308.4L425.5 308L425 308.3L424.5 307.9L424 308L423.5 308.2L423 308.2L422.5 308.4L422 308.1L421.5 308.3L421 308.1L420.5 307.8L420 307.9L419.5 307.9L419 307.5L418.5 307.2L418 307.1L417.5 306.8L417 306L416.5 305.4L416 305.2L415.5 304.9L415 305.3L414.5 305.8L414 305.5L413.5 304.9L413 304.6L412.5 304.5L412 304.6L411.5 304.6L411 304.6L410.5 304.7L410 304.7L409.5 304.8L409 304.9L408.5 305.3L408 305.7L407.5 306.1L407 306.5L406.5 306.9L406 307.2L405.5 307.9L405 307.9L404.5 308.4L404 308.6L403.5 308.7L403 309L402.5 308.8L402 308.7L401.5 309.3L401 309.6L400.5 309.2L400 309.9L399.5 309.4L399 310.1L398.5 309.7L398 310.4L397.5 310.5L397 309.9L396.5 309.4L396 309.3L395.5 308.5L395 308.4L394.5 307.7L394 306.9L393.5 306.2L393 305.3L392.5 305.8L392 306.3L391.5 307.1L391 307.5L390.5 307.5L390 308.3L389.5 308.6L389 308.6L388.5 308.5L388 308.9L387.5 308.7L387 309.4L386.5 308.9L386 309.5L385.5 309.6L385 309.3L384.5 309.4L384 309.3L383.5 309.3L383 309.6L382.5 309.4L382 309.2L381.5 309.5L381 309.7L380.5 309.6L380 309.6L379.5 309.5L379 309.8L378.5 309.3L378 309.1L377.5 309.5L377 309.7L376.5 309.7L376 309.3L375.5 309.6L375 309.1L374.5 309.2L374 308.9L373.5 308.7L373 309.1L372.5 309L372 308.6L371.5 308L371 308.1L370.5 307.9L370 307.5L369.5 307L369 306.1L368.5 305.3L368 305L367.5 304.9L367 304.9L366.5 304.8L366 304.8L365.5 304.8L365 304.8L364.5 304.8L364 304.8L363.5 304.8L363 304.8L362.5 304.8L362 304.8L361.5 304.9L361 304.9L360.5 305.2L360 305.5L359.5 305.8L359 306L358.5 306.5L358 306.7L357.5 307.2L357 307.5L356.5 307.6L356 308.1L355.5 308.2L355 307.9L354.5 307.3L354 307.2L353.5 306.5L353 306.2L352.5 306L352 305.3L351.5 304.8L351 304.8L350.5 304.7L350 304.7L349.5 304.8L349 304.8L348.5 304.9L348 304.9L347.5 305L347 305.1L346.5 305.3L346 305.4L345.5 305.5L345 305.5L344.5 305.6L344 305.4L343.5 305.2L343 305L342.5 305L342 305.1L341.5 305.1L341 304.8L340.5 304.5ZM482 304.5L482.5 303.9L483 303.4L483.5 303.9L484 304.5L484 304.5L483.5 304.6L483 304.8L482.5 304.6L482 304.5ZM497 304.5L497.5 303.9L498 303.2L498.5 303.9L499 304.5L499 304.5L498.5 304.6L498 304.8L497.5 304.6L497 304.5ZM509.5 304.5L510 304.1L510.5 303.5L511 303.8L511.5 304.4L512 304.5L512 304.5L511.5 304.5L511 304.7L510.5 304.8L510 304.6L509.5 304.5ZM518 304.5L518.5 304.3L519 303.2L519.5 302.7L520 303.6L520.5 304.5L520.5 304.5L520 305.2L519.5 306L519 305.6L518.5 304.7L518 304.5Z" fill="#08086c" stroke="#08086c" stroke-width="0.3" stroke-linejoin="round"/>
<line x1="76.4" y1="124.5" x2="76.4" y2="365" stroke="#1c1cac" stroke-width="1.6" />
<text x="54.2" y="141.9" font-size="8.2" fill="#14141e" text-anchor="start" font-weight="normal" textLength="7" lengthAdjust="spacingAndGlyphs" stroke="#14141e" stroke-width=".2">-3</text>
<text x="54.2" y="156.6" font-size="8.2" fill="#14141e" text-anchor="start" font-weight="normal" textLength="7" lengthAdjust="spacingAndGlyphs" stroke="#14141e" stroke-width=".2">-6</text>
<text x="54.2" y="171.5" font-size="8.2" fill="#14141e" text-anchor="start" font-weight="normal" textLength="11.2" lengthAdjust="spacingAndGlyphs" stroke="#14141e" stroke-width=".2">-12</text>
<text x="54.2" y="186.9" font-size="8.2" fill="#14141e" text-anchor="start" font-weight="normal" textLength="13" lengthAdjust="spacingAndGlyphs" stroke="#14141e" stroke-width=".2">-dB</text>
<text x="54.2" y="202" font-size="8.2" fill="#14141e" text-anchor="start" font-weight="normal" textLength="11.2" lengthAdjust="spacingAndGlyphs" stroke="#14141e" stroke-width=".2">-12</text>
<text x="54.2" y="216.8" font-size="8.2" fill="#14141e" text-anchor="start" font-weight="normal" textLength="7" lengthAdjust="spacingAndGlyphs" stroke="#14141e" stroke-width=".2">-6</text>
<text x="54.2" y="232" font-size="8.2" fill="#14141e" text-anchor="start" font-weight="normal" textLength="7" lengthAdjust="spacingAndGlyphs" stroke="#14141e" stroke-width=".2">-3</text>
<text x="54.2" y="261.8" font-size="8.2" fill="#14141e" text-anchor="start" font-weight="normal" textLength="7" lengthAdjust="spacingAndGlyphs" stroke="#14141e" stroke-width=".2">-3</text>
<text x="54.2" y="276.5" font-size="8.2" fill="#14141e" text-anchor="start" font-weight="normal" textLength="7" lengthAdjust="spacingAndGlyphs" stroke="#14141e" stroke-width=".2">-6</text>
<text x="54.2" y="291.4" font-size="8.2" fill="#14141e" text-anchor="start" font-weight="normal" textLength="11.2" lengthAdjust="spacingAndGlyphs" stroke="#14141e" stroke-width=".2">-12</text>
<text x="54.2" y="306.8" font-size="8.2" fill="#14141e" text-anchor="start" font-weight="normal" textLength="13" lengthAdjust="spacingAndGlyphs" stroke="#14141e" stroke-width=".2">-dB</text>
<text x="54.2" y="321.9" font-size="8.2" fill="#14141e" text-anchor="start" font-weight="normal" textLength="11.2" lengthAdjust="spacingAndGlyphs" stroke="#14141e" stroke-width=".2">-12</text>
<text x="54.2" y="336.7" font-size="8.2" fill="#14141e" text-anchor="start" font-weight="normal" textLength="7" lengthAdjust="spacingAndGlyphs" stroke="#14141e" stroke-width=".2">-6</text>
<text x="54.2" y="351.9" font-size="8.2" fill="#14141e" text-anchor="start" font-weight="normal" textLength="7" lengthAdjust="spacingAndGlyphs" stroke="#14141e" stroke-width=".2">-3</text>
<rect x="76" y="366" width="543" height="13" fill="#f0f0f0" />
<rect x="90" y="366" width="301.6" height="13" fill="#cdcdcd" />
<path d="M85.2 369.4L81.2 372.6L85.2 375.8" fill="none" stroke="#444" stroke-width="1.4"/>
<path d="M610 369.2L614 372.4L610 375.6" fill="none" stroke="#444" stroke-width="1.4"/>
<text x="53.7" y="393.4" font-size="10" fill="#000" text-anchor="start" font-weight="normal" textLength="94.3" lengthAdjust="spacingAndGlyphs" >Record : 12.8 seconds</text>
<line x1="344" y1="383.5" x2="373" y2="383.5" stroke="#a0a0a0" stroke-width="1" />
<line x1="344.5" y1="383" x2="344.5" y2="397" stroke="#a0a0a0" stroke-width="1" />
<line x1="344" y1="396.5" x2="373" y2="396.5" stroke="#fff" stroke-width="1" />
<line x1="372.5" y1="383" x2="372.5" y2="397" stroke="#fff" stroke-width="1" />
<text x="346.7" y="393.9" font-size="10.1" fill="#000" text-anchor="start" font-weight="normal" textLength="23" lengthAdjust="spacingAndGlyphs" >16 bit</text>
<line x1="375" y1="383.5" x2="421" y2="383.5" stroke="#a0a0a0" stroke-width="1" />
<line x1="375.5" y1="383" x2="375.5" y2="397" stroke="#a0a0a0" stroke-width="1" />
<line x1="375" y1="396.5" x2="421" y2="396.5" stroke="#fff" stroke-width="1" />
<line x1="420.5" y1="383" x2="420.5" y2="397" stroke="#fff" stroke-width="1" />
<text x="377" y="393.9" font-size="10.1" fill="#000" text-anchor="start" font-weight="normal" textLength="33" lengthAdjust="spacingAndGlyphs" >STEREO</text>
<line x1="423.5" y1="383.5" x2="472.5" y2="383.5" stroke="#a0a0a0" stroke-width="1" />
<line x1="424" y1="383" x2="424" y2="397" stroke="#a0a0a0" stroke-width="1" />
<line x1="423.5" y1="396.5" x2="472.5" y2="396.5" stroke="#fff" stroke-width="1" />
<line x1="472" y1="383" x2="472" y2="397" stroke="#fff" stroke-width="1" />
<text x="425.7" y="393.9" font-size="10.1" fill="#000" text-anchor="start" font-weight="normal" textLength="38" lengthAdjust="spacingAndGlyphs" >44100 Hz</text>
<line x1="474.5" y1="383.5" x2="600" y2="383.5" stroke="#a0a0a0" stroke-width="1" />
<line x1="475" y1="383" x2="475" y2="397" stroke="#a0a0a0" stroke-width="1" />
<line x1="474.5" y1="396.5" x2="600" y2="396.5" stroke="#fff" stroke-width="1" />
<line x1="599.5" y1="383" x2="599.5" y2="397" stroke="#fff" stroke-width="1" />
<text x="477" y="393.9" font-size="10.1" fill="#000" text-anchor="start" font-weight="normal" textLength="114.6" lengthAdjust="spacingAndGlyphs" >00:00:00:000 - 00:00:00:000</text>
<line x1="602.3" y1="383.5" x2="640" y2="383.5" stroke="#a0a0a0" stroke-width="1" />
<line x1="602.8" y1="383" x2="602.8" y2="397" stroke="#a0a0a0" stroke-width="1" />
<line x1="602.3" y1="396.5" x2="640" y2="396.5" stroke="#fff" stroke-width="1" />
<line x1="639.5" y1="383" x2="639.5" y2="397" stroke="#fff" stroke-width="1" />
<text x="604.3" y="393.9" font-size="10.1" fill="#000" text-anchor="start" font-weight="normal" textLength="14" lengthAdjust="spacingAndGlyphs" >d=(</text>
<rect x="620" y="103" width="49" height="292.5" fill="#f5f5f5" />
<line x1="620" y1="103.4" x2="669" y2="103.4" stroke="#b4b4b4" stroke-width="1" />
<rect x="646" y="104" width="5" height="291.4" fill="#fff" />
<rect x="633" y="105" width="13" height="12.8" fill="#000" />
<rect x="651.2" y="105" width="13.2" height="12.8" fill="#000" />
<rect x="633.2" y="121" width="12.8" height="274" fill="#333" stroke="#1a1a1a" stroke-width=".8"/>
<rect x="651.1" y="121" width="12.9" height="274" fill="#333" stroke="#1a1a1a" stroke-width=".8"/>
<text x="620.6" y="132.9" font-size="7.2" fill="#0c0c20" text-anchor="start" font-weight="normal" textLength="5" lengthAdjust="spacingAndGlyphs" stroke="#0c0c20" stroke-width=".3">-3</text>
<rect x="647.4" y="129.7" width="2.2" height="1.2" fill="#1c1c1c" />
<text x="620.6" y="142.11" font-size="7.2" fill="#0c0c20" text-anchor="start" font-weight="normal" textLength="5" lengthAdjust="spacingAndGlyphs" stroke="#0c0c20" stroke-width=".3">-6</text>
<rect x="647.4" y="138.91" width="2.2" height="1.2" fill="#1c1c1c" />
<text x="620.6" y="151.32" font-size="7.2" fill="#0c0c20" text-anchor="start" font-weight="normal" textLength="5" lengthAdjust="spacingAndGlyphs" stroke="#0c0c20" stroke-width=".3">-9</text>
<rect x="647.4" y="148.12" width="2.2" height="1.2" fill="#1c1c1c" />
<text x="620.6" y="160.53" font-size="7.2" fill="#0c0c20" text-anchor="start" font-weight="normal" textLength="8.5" lengthAdjust="spacingAndGlyphs" stroke="#0c0c20" stroke-width=".3">-12</text>
<rect x="647.4" y="157.33" width="2.2" height="1.2" fill="#1c1c1c" />
<text x="620.6" y="169.74" font-size="7.2" fill="#0c0c20" text-anchor="start" font-weight="normal" textLength="8.5" lengthAdjust="spacingAndGlyphs" stroke="#0c0c20" stroke-width=".3">-15</text>
<rect x="647.4" y="166.54" width="2.2" height="1.2" fill="#1c1c1c" />
<text x="620.6" y="178.95" font-size="7.2" fill="#0c0c20" text-anchor="start" font-weight="normal" textLength="8.5" lengthAdjust="spacingAndGlyphs" stroke="#0c0c20" stroke-width=".3">-18</text>
<rect x="647.4" y="175.75" width="2.2" height="1.2" fill="#1c1c1c" />
<text x="620.6" y="188.16" font-size="7.2" fill="#0c0c20" text-anchor="start" font-weight="normal" textLength="8.5" lengthAdjust="spacingAndGlyphs" stroke="#0c0c20" stroke-width=".3">-21</text>
<rect x="647.4" y="184.96" width="2.2" height="1.2" fill="#1c1c1c" />
<text x="620.6" y="197.37" font-size="7.2" fill="#0c0c20" text-anchor="start" font-weight="normal" textLength="8.5" lengthAdjust="spacingAndGlyphs" stroke="#0c0c20" stroke-width=".3">-24</text>
<rect x="647.4" y="194.17" width="2.2" height="1.2" fill="#1c1c1c" />
<text x="620.6" y="206.58" font-size="7.2" fill="#0c0c20" text-anchor="start" font-weight="normal" textLength="8.5" lengthAdjust="spacingAndGlyphs" stroke="#0c0c20" stroke-width=".3">-27</text>
<rect x="647.4" y="203.38" width="2.2" height="1.2" fill="#1c1c1c" />
<text x="620.6" y="215.79" font-size="7.2" fill="#0c0c20" text-anchor="start" font-weight="normal" textLength="8.5" lengthAdjust="spacingAndGlyphs" stroke="#0c0c20" stroke-width=".3">-30</text>
<rect x="647.4" y="212.59" width="2.2" height="1.2" fill="#1c1c1c" />
<text x="620.6" y="225" font-size="7.2" fill="#0c0c20" text-anchor="start" font-weight="normal" textLength="8.5" lengthAdjust="spacingAndGlyphs" stroke="#0c0c20" stroke-width=".3">-33</text>
<rect x="647.4" y="221.8" width="2.2" height="1.2" fill="#1c1c1c" />
<text x="620.6" y="234.21" font-size="7.2" fill="#0c0c20" text-anchor="start" font-weight="normal" textLength="8.5" lengthAdjust="spacingAndGlyphs" stroke="#0c0c20" stroke-width=".3">-36</text>
<rect x="647.4" y="231.01" width="2.2" height="1.2" fill="#1c1c1c" />
<text x="620.6" y="243.42" font-size="7.2" fill="#0c0c20" text-anchor="start" font-weight="normal" textLength="8.5" lengthAdjust="spacingAndGlyphs" stroke="#0c0c20" stroke-width=".3">-39</text>
<rect x="647.4" y="240.22" width="2.2" height="1.2" fill="#1c1c1c" />
<text x="620.6" y="252.63" font-size="7.2" fill="#0c0c20" text-anchor="start" font-weight="normal" textLength="8.5" lengthAdjust="spacingAndGlyphs" stroke="#0c0c20" stroke-width=".3">-42</text>
<rect x="647.4" y="249.43" width="2.2" height="1.2" fill="#1c1c1c" />
<text x="620.6" y="261.84" font-size="7.2" fill="#0c0c20" text-anchor="start" font-weight="normal" textLength="8.5" lengthAdjust="spacingAndGlyphs" stroke="#0c0c20" stroke-width=".3">-45</text>
<rect x="647.4" y="258.64" width="2.2" height="1.2" fill="#1c1c1c" />
<text x="620.6" y="271.05" font-size="7.2" fill="#0c0c20" text-anchor="start" font-weight="normal" textLength="8.5" lengthAdjust="spacingAndGlyphs" stroke="#0c0c20" stroke-width=".3">-48</text>
<rect x="647.4" y="267.85" width="2.2" height="1.2" fill="#1c1c1c" />
<text x="620.6" y="280.26" font-size="7.2" fill="#0c0c20" text-anchor="start" font-weight="normal" textLength="8.5" lengthAdjust="spacingAndGlyphs" stroke="#0c0c20" stroke-width=".3">-51</text>
<rect x="647.4" y="277.06" width="2.2" height="1.2" fill="#1c1c1c" />
<text x="620.6" y="289.47" font-size="7.2" fill="#0c0c20" text-anchor="start" font-weight="normal" textLength="8.5" lengthAdjust="spacingAndGlyphs" stroke="#0c0c20" stroke-width=".3">-54</text>
<rect x="647.4" y="286.27" width="2.2" height="1.2" fill="#1c1c1c" />
<text x="620.6" y="298.68" font-size="7.2" fill="#0c0c20" text-anchor="start" font-weight="normal" textLength="8.5" lengthAdjust="spacingAndGlyphs" stroke="#0c0c20" stroke-width=".3">-57</text>
<rect x="647.4" y="295.48" width="2.2" height="1.2" fill="#1c1c1c" />
<text x="620.6" y="307.89" font-size="7.2" fill="#0c0c20" text-anchor="start" font-weight="normal" textLength="8.5" lengthAdjust="spacingAndGlyphs" stroke="#0c0c20" stroke-width=".3">-60</text>
<rect x="647.4" y="304.69" width="2.2" height="1.2" fill="#1c1c1c" />
<text x="620.6" y="317.1" font-size="7.2" fill="#0c0c20" text-anchor="start" font-weight="normal" textLength="8.5" lengthAdjust="spacingAndGlyphs" stroke="#0c0c20" stroke-width=".3">-63</text>
<rect x="647.4" y="313.9" width="2.2" height="1.2" fill="#1c1c1c" />
<text x="620.6" y="326.31" font-size="7.2" fill="#0c0c20" text-anchor="start" font-weight="normal" textLength="8.5" lengthAdjust="spacingAndGlyphs" stroke="#0c0c20" stroke-width=".3">-66</text>
<rect x="647.4" y="323.11" width="2.2" height="1.2" fill="#1c1c1c" />
<text x="620.6" y="335.52" font-size="7.2" fill="#0c0c20" text-anchor="start" font-weight="normal" textLength="8.5" lengthAdjust="spacingAndGlyphs" stroke="#0c0c20" stroke-width=".3">-69</text>
<rect x="647.4" y="332.32" width="2.2" height="1.2" fill="#1c1c1c" />
<text x="620.6" y="344.73" font-size="7.2" fill="#0c0c20" text-anchor="start" font-weight="normal" textLength="8.5" lengthAdjust="spacingAndGlyphs" stroke="#0c0c20" stroke-width=".3">-72</text>
<rect x="647.4" y="341.53" width="2.2" height="1.2" fill="#1c1c1c" />
<text x="620.6" y="353.94" font-size="7.2" fill="#0c0c20" text-anchor="start" font-weight="normal" textLength="8.5" lengthAdjust="spacingAndGlyphs" stroke="#0c0c20" stroke-width=".3">-75</text>
<rect x="647.4" y="350.74" width="2.2" height="1.2" fill="#1c1c1c" />
<text x="620.6" y="363.15" font-size="7.2" fill="#0c0c20" text-anchor="start" font-weight="normal" textLength="8.5" lengthAdjust="spacingAndGlyphs" stroke="#0c0c20" stroke-width=".3">-78</text>
<rect x="647.4" y="359.95" width="2.2" height="1.2" fill="#1c1c1c" />
<text x="620.6" y="372.36" font-size="7.2" fill="#0c0c20" text-anchor="start" font-weight="normal" textLength="8.5" lengthAdjust="spacingAndGlyphs" stroke="#0c0c20" stroke-width=".3">-81</text>
<rect x="647.4" y="369.16" width="2.2" height="1.2" fill="#1c1c1c" />
<text x="620.6" y="381.57" font-size="7.2" fill="#0c0c20" text-anchor="start" font-weight="normal" textLength="8.5" lengthAdjust="spacingAndGlyphs" stroke="#0c0c20" stroke-width=".3">-84</text>
<rect x="647.4" y="378.37" width="2.2" height="1.2" fill="#1c1c1c" />
<text x="620.6" y="390.78" font-size="7.2" fill="#0c0c20" text-anchor="start" font-weight="normal" textLength="8.5" lengthAdjust="spacingAndGlyphs" stroke="#0c0c20" stroke-width=".3">-87</text>
<rect x="647.4" y="387.58" width="2.2" height="1.2" fill="#1c1c1c" />
<rect x="647.4" y="120.6" width="2.2" height="1.2" fill="#1c1c1c" />
<line x1="1" y1="395.5" x2="52" y2="395.5" stroke="#fff" stroke-width="1" />
<line x1="1" y1="414.5" x2="157" y2="414.5" stroke="#b4b4b4" stroke-width="1" />
<line x1="1" y1="415.5" x2="158" y2="415.5" stroke="#fff" stroke-width="1" />
<line x1="156.5" y1="397" x2="156.5" y2="415" stroke="#a0a0a0" stroke-width="1" />
<line x1="157.5" y1="397" x2="157.5" y2="415" stroke="#fff" stroke-width="1" />
<line x1="3.5" y1="398" x2="3.5" y2="413" stroke="#fff" stroke-width="1" />
<line x1="4.5" y1="398" x2="4.5" y2="413" stroke="#8c8c8c" stroke-width="1" />
<line x1="1" y1="414.5" x2="281" y2="414.5" stroke="#b4b4b4" stroke-width="1" />
<line x1="1" y1="415.5" x2="282" y2="415.5" stroke="#fff" stroke-width="1" />
<line x1="280.5" y1="397" x2="280.5" y2="415" stroke="#a0a0a0" stroke-width="1" />
<line x1="281.5" y1="397" x2="281.5" y2="415" stroke="#fff" stroke-width="1" />
<line x1="160.5" y1="398" x2="160.5" y2="413" stroke="#fff" stroke-width="1" />
<line x1="161.5" y1="398" x2="161.5" y2="413" stroke="#8c8c8c" stroke-width="1" />
<line x1="47.5" y1="399" x2="47.5" y2="412" stroke="#a0a0a0" stroke-width="1" />
<line x1="48.5" y1="399" x2="48.5" y2="412" stroke="#fff" stroke-width="1" />
<line x1="71.5" y1="399" x2="71.5" y2="412" stroke="#a0a0a0" stroke-width="1" />
<line x1="72.5" y1="399" x2="72.5" y2="412" stroke="#fff" stroke-width="1" />
<line x1="115.5" y1="399" x2="115.5" y2="412" stroke="#a0a0a0" stroke-width="1" />
<line x1="116.5" y1="399" x2="116.5" y2="412" stroke="#fff" stroke-width="1" />
<text x="166.7" y="409.7" font-size="9.8" fill="#0000f0" text-anchor="start" font-weight="normal" textLength="106" lengthAdjust="spacingAndGlyphs" stroke="#0000f0" stroke-width=".2">http://www.wavosaur.com</text>
<line x1="166.7" y1="411.3" x2="272.8" y2="411.3" stroke="#0000ee" stroke-width="1" />
<line x1="1" y1="416.5" x2="669" y2="416.5" stroke="#c4c4c4" stroke-width="1" />
<text x="2.6" y="429.5" font-size="9.7" fill="#000" text-anchor="start" font-weight="normal" textLength="26.4" lengthAdjust="spacingAndGlyphs" >Ready</text>
<line x1="569.5" y1="418.8" x2="593.3" y2="418.8" stroke="#b4b4b4" stroke-width="1" />
<line x1="569.9" y1="418.4" x2="569.9" y2="433" stroke="#b4b4b4" stroke-width="1" />
<line x1="593.3" y1="418.8" x2="593.3" y2="433" stroke="#fff" stroke-width="1" />
<line x1="595.6" y1="418.8" x2="623" y2="418.8" stroke="#b4b4b4" stroke-width="1" />
<line x1="596" y1="418.4" x2="596" y2="433" stroke="#b4b4b4" stroke-width="1" />
<line x1="623" y1="418.8" x2="623" y2="433" stroke="#fff" stroke-width="1" />
<line x1="625.8" y1="418.8" x2="653" y2="418.8" stroke="#b4b4b4" stroke-width="1" />
<line x1="626.2" y1="418.4" x2="626.2" y2="433" stroke="#b4b4b4" stroke-width="1" />
<line x1="653" y1="418.8" x2="653" y2="433" stroke="#fff" stroke-width="1" />
<line x1="665" y1="432.6" x2="668.6" y2="429" stroke="#b0b0b0" stroke-width="1.1" />
<line x1="661.8" y1="432.6" x2="668.6" y2="425.8" stroke="#b0b0b0" stroke-width="1.1" />
<line x1="658.6" y1="432.6" x2="668.6" y2="422.6" stroke="#b0b0b0" stroke-width="1.1" />
<g transform="translate(7.8 5.6)">
<path d="M-0.4 -0.2L2.8 0.8L1.6 4Z" fill="#f8e808" stroke="#806000" stroke-width="0.3" />
<path d="M13.4 -0.2L10.2 0.8L11.4 4Z" fill="#f8e808" stroke="#806000" stroke-width="0.3" />
<ellipse cx="6.5" cy="12.2" rx="5.6" ry="1.4" fill="#041404" stroke="none" stroke-width="1"/>
<ellipse cx="6.5" cy="12.1" rx="3.2" ry="0.9" fill="#0a740a" stroke="none" stroke-width="1"/>
<path d="M2.2 1.2Q6.5 0.2 10.8 1.2Q12.5 1.7 12.4 4V8Q12.3 10.2 10 10.9H3Q0.7 10.2 0.6 8V4Q0.5 1.7 2.2 1.2Z" fill="#0a800e" stroke="#031c03" stroke-width="0.9" />
<path d="M2.2 6.8L4.4 8.2L6.5 7L8.6 8.2L10.8 6.8" fill="none" stroke="#032803" stroke-width="1" />
<path d="M5.2 1.4L6.5 3.6L7.8 1.4" fill="none" stroke="#032003" stroke-width="0.9" />
<ellipse cx="4.4" cy="4.4" rx="1.9" ry="2.1" fill="#b8acb8" stroke="#1c241c" stroke-width="0.5"/>
<ellipse cx="8.6" cy="4.4" rx="1.9" ry="2.1" fill="#b8acb8" stroke="#1c241c" stroke-width="0.5"/>
<ellipse cx="4.9" cy="5" rx="0.7" ry="1" fill="#4a444a" stroke="none" stroke-width="1"/>
<ellipse cx="8.1" cy="5" rx="0.7" ry="1" fill="#4a444a" stroke="none" stroke-width="1"/>
<path d="M4.9 9.7Q6.5 7.2 8.1 9.7Z" fill="#ff1414" stroke="none" stroke-width="1" />
<line x1="4.7" y1="10.1" x2="8.3" y2="10.1" stroke="#e8c4c4" stroke-width="0.6" />
</g>
<g transform="translate(7.8 26.6)">
<path d="M-0.4 -0.2L2.8 0.8L1.6 4Z" fill="#f8e808" stroke="#806000" stroke-width="0.3" />
<path d="M13.4 -0.2L10.2 0.8L11.4 4Z" fill="#f8e808" stroke="#806000" stroke-width="0.3" />
<ellipse cx="6.5" cy="12.2" rx="5.6" ry="1.4" fill="#041404" stroke="none" stroke-width="1"/>
<ellipse cx="6.5" cy="12.1" rx="3.2" ry="0.9" fill="#0a740a" stroke="none" stroke-width="1"/>
<path d="M2.2 1.2Q6.5 0.2 10.8 1.2Q12.5 1.7 12.4 4V8Q12.3 10.2 10 10.9H3Q0.7 10.2 0.6 8V4Q0.5 1.7 2.2 1.2Z" fill="#0a800e" stroke="#031c03" stroke-width="0.9" />
<path d="M2.2 6.8L4.4 8.2L6.5 7L8.6 8.2L10.8 6.8" fill="none" stroke="#032803" stroke-width="1" />
<path d="M5.2 1.4L6.5 3.6L7.8 1.4" fill="none" stroke="#032003" stroke-width="0.9" />
<ellipse cx="4.4" cy="4.4" rx="1.9" ry="2.1" fill="#b8acb8" stroke="#1c241c" stroke-width="0.5"/>
<ellipse cx="8.6" cy="4.4" rx="1.9" ry="2.1" fill="#b8acb8" stroke="#1c241c" stroke-width="0.5"/>
<ellipse cx="4.9" cy="5" rx="0.7" ry="1" fill="#4a444a" stroke="none" stroke-width="1"/>
<ellipse cx="8.1" cy="5" rx="0.7" ry="1" fill="#4a444a" stroke="none" stroke-width="1"/>
<path d="M4.9 9.7Q6.5 7.2 8.1 9.7Z" fill="#ff1414" stroke="none" stroke-width="1" />
<line x1="4.7" y1="10.1" x2="8.3" y2="10.1" stroke="#e8c4c4" stroke-width="0.6" />
</g>
<path d="M12.2 47.2H17.6L20.8 50.4V57.4H12.2Z" fill="#fff" stroke="#000" stroke-width="1.1" />
<path d="M17.4 47.4V50.6H20.6" fill="none" stroke="#000" stroke-width="0.8" />
<path d="M29.6 57.4V49.8H31.2L32.2 48.8H35.2L36 49.8H38.8V52" fill="#e6e67a" stroke="#000" stroke-width="0.9" />
<path d="M29.6 57.4L32.6 52.2H41.8L38.6 57.4Z" fill="#8c8c14" stroke="#000" stroke-width="0.9" />
<path d="M30.6 56V50.8H35.6" fill="none" stroke="#ffffc0" stroke-width="0.8" />
<path d="M36.6 48.2Q38.8 46.6 40.4 48.6" fill="none" stroke="#000" stroke-width="0.9" />
<path d="M41.4 47.6V50H39Z" fill="#000" stroke="none" stroke-width="1" />
<rect x="49.1" y="47.5" width="10.6" height="10.6" fill="#8a8a10" stroke="#000" stroke-width="1" />
<rect x="51.2" y="48" width="6.2" height="4" fill="#f4f4f4" stroke="#404040" stroke-width="0.4" />
<rect x="51" y="53.8" width="6.8" height="4.2" fill="#000" stroke="none" stroke-width="1" />
<rect x="55.8" y="55" width="1.4" height="2.2" fill="#e8e8e8" stroke="none" stroke-width="1" />
<line x1="49.8" y1="52.6" x2="59.2" y2="52.6" stroke="#c8c83c" stroke-width="0.7" />
<path d="M77.3 46.9L81 54.8M82 46.9L78.3 54.8" fill="none" stroke="#000" stroke-width="1.25" />
<ellipse cx="77.2" cy="56.5" rx="1.6" ry="1.9" fill="none" stroke="#2424b4" stroke-width="1.2"/>
<ellipse cx="81.9" cy="56.5" rx="1.6" ry="1.9" fill="none" stroke="#2424b4" stroke-width="1.2"/>
<path d="M92.7 47.5H96.2L98 49.3V54.9H92.7Z" fill="#e4e4e4" stroke="#000" stroke-width="1.2" />
<line x1="94" y1="50.2" x2="96.6" y2="50.2" stroke="#505050" stroke-width="0.8" />
<line x1="94" y1="51.8" x2="96.6" y2="51.8" stroke="#505050" stroke-width="0.8" />
<line x1="94" y1="53.4" x2="96.6" y2="53.4" stroke="#505050" stroke-width="0.8" />
<path d="M97.6 50.1H102L104.5 52.5V57.4H97.6Z" fill="#e0e0ea" stroke="#0c0c94" stroke-width="1.4" />
<path d="M101.8 50.4V52.8H104.2" fill="none" stroke="#0c0c94" stroke-width="0.9" />
<line x1="99.2" y1="54" x2="102.8" y2="54" stroke="#606068" stroke-width="0.9" />
<line x1="99.2" y1="55.7" x2="102.8" y2="55.7" stroke="#606068" stroke-width="0.9" />
<rect x="112" y="48.4" width="10" height="8.6" fill="#8a8238" stroke="#000" stroke-width="1.3" />
<rect x="115.4" y="49.8" width="2.4" height="6.4" fill="#b4aa5c" stroke="none" stroke-width="1" />
<path d="M114.2 49.2V48Q114.2 46.4 117 46.4Q119.8 46.4 119.8 48V49.2Z" fill="#181808" stroke="#000" stroke-width="0.6" />
<circle cx="117" cy="47.8" r="0.9" fill="#f0e040" stroke="none" stroke-width="1"/>
<rect x="117.2" y="52.7" width="6.4" height="5.2" fill="#f4f4fa" stroke="#0c0c94" stroke-width="1.4" />
<line x1="118.8" y1="54.4" x2="121" y2="54.4" stroke="#3030a0" stroke-width="0.9" />
<line x1="118.8" y1="56.1" x2="122.2" y2="56.1" stroke="#3030a0" stroke-width="0.9" />
<rect x="131.3" y="48.4" width="10" height="8.6" fill="#8a8238" stroke="#000" stroke-width="1.3" />
<rect x="134.7" y="49.8" width="2.4" height="6.4" fill="#b4aa5c" stroke="none" stroke-width="1" />
<path d="M133.5 49.2V48Q133.5 46.4 136.3 46.4Q139.1 46.4 139.1 48V49.2Z" fill="#181808" stroke="#000" stroke-width="0.6" />
<circle cx="136.3" cy="47.8" r="0.9" fill="#f0e040" stroke="none" stroke-width="1"/>
<rect x="136.5" y="52.7" width="6.4" height="5.2" fill="#f4f4fa" stroke="#0c0c94" stroke-width="1.4" />
<line x1="137.9" y1="55.3" x2="141.7" y2="55.3" stroke="#000" stroke-width="1.1" />
<line x1="139.8" y1="53.5" x2="139.8" y2="57.1" stroke="#000" stroke-width="1.1" />
<path d="M153.4 49L152.6 58.2M158.6 48.6L157.8 57.4M150.4 56L159.6 55.2M151.4 51.6L160.6 50.8" fill="none" stroke="#0a0aff" stroke-width="1.7" />
<path d="M150.6 48.6L153.2 51M160.6 48.4L158.4 50.6" fill="none" stroke="#0a0aff" stroke-width="1.5" />
<rect x="153.6" y="51.6" width="4" height="3.6" fill="#0a0aff" stroke="none" stroke-width="1" />
<circle cx="155.6" cy="53.4" r="1.05" fill="#e8e8f8" stroke="#3030c0" stroke-width="0.4"/>
<path d="M172 55Q176 49.2 179 52.4Q180.4 54.6 177.4 56.2" fill="none" stroke="#a4a4a4" stroke-width="1.1" />
<path d="M170 50.6V55.4H174.8" fill="none" stroke="#a4a4a4" stroke-width="1.1" />
<text x="195.3" y="57.6" font-size="14" fill="#e4e410" font-weight="bold" textLength="7.6" lengthAdjust="spacingAndGlyphs" stroke="#141400" stroke-width="1.7" paint-order="stroke" stroke-linejoin="round">?</text>
<path d="M221.6 51.2H223.8L227 48.2V57.6L223.8 54.6H221.6Z" fill="#f0f0f0" stroke="#111" stroke-width="1" />
<path d="M229 50.4L230.6 49M229.2 53H231.2M229 55.4L230.6 56.8" fill="none" stroke="#111" stroke-width="1" />
<path d="M241.4 54.6V53.2Q241.4 52.2 242.6 52.2H247.6Q248.8 52.2 248.8 51V50" fill="none" stroke="#111" stroke-width="1.2" />
<ellipse cx="241.4" cy="56" rx="1.2" ry="1.6" fill="#808080" stroke="#111" stroke-width="0.8"/>
<ellipse cx="249.4" cy="48.9" rx="1.6" ry="1.2" fill="#808080" stroke="#111" stroke-width="0.8"/>
<line x1="262" y1="49.6" x2="267.4" y2="51.6" stroke="#111" stroke-width="1" />
<ellipse cx="261" cy="49.5" rx="1.9" ry="1.2" fill="#909090" stroke="#111" stroke-width="0.8"/>
<ellipse cx="261" cy="54" rx="1.9" ry="1.2" fill="#909090" stroke="#111" stroke-width="0.8"/>
<ellipse cx="268.8" cy="51.6" rx="2" ry="1.2" fill="#909090" stroke="#111" stroke-width="0.8"/>
<path d="M281.2 55.4L286.6 50.4" fill="none" stroke="#1c1c1c" stroke-width="3" />
<circle cx="279.9" cy="56.7" r="2.9" fill="#e2e2e2" stroke="#1c1c1c" stroke-width="1.1"/>
<circle cx="288" cy="49.1" r="2.9" fill="#e2e2e2" stroke="#1c1c1c" stroke-width="1.1"/>
<path d="M281.2 55.4L286.6 50.4" fill="none" stroke="#e2e2e2" stroke-width="1.3" />
<path d="M276.6 59.6L279.4 57.1" fill="none" stroke="#f0f0f0" stroke-width="1.8" />
<path d="M291.3 46.2L288.5 48.7" fill="none" stroke="#f0f0f0" stroke-width="1.8" />
<path d="M301 52.6L301.5 50.5L302 51.5L302.6 49.7L303.2 50.9L303.8 50.1L304.4 51.1L305.2 50.7L306 51.8L306.8 52.2L307.6 51.7L308.4 51.9L309.2 50.9L310 51.5L310.8 50.1L311.6 51.1L312.4 49.3L313.2 50.5L313.8 49.7L314.6 51.5L315.4 52.6L315.4 53.2L314.6 54.3L313.8 56.1L313.2 55.3L312.4 56.5L311.6 54.7L310.8 55.7L310 54.3L309.2 54.9L308.4 53.9L307.6 54.1L306.8 53.6L306 54L305.2 55.1L304.4 54.7L303.8 55.7L303.2 54.9L302.6 56.1L302 54.3L301.5 55.3L301 53.2Z" fill="#0a0aff" stroke="none" stroke-width="1" />
<line x1="303.4" y1="47.4" x2="303.4" y2="58.4" stroke="#2a2a50" stroke-width="1.3" />
<line x1="307.9" y1="47.4" x2="307.9" y2="58.4" stroke="#2a2a50" stroke-width="1.3" />
<line x1="311.9" y1="47.4" x2="311.9" y2="58.4" stroke="#2a2a50" stroke-width="1.3" />
<path d="M320.5 52.6L321.2 50.6L322 49.8L323 50.4L324 50L325 48L326 50.2L327 49.6L328 50.3L329 49.9L330 47.8L331 50.2L332 49.7L333 50.4L333.8 51.2L334.3 52.6L334.3 53.8L333.2 55.6L332.2 58.2L331 55.8L329.8 58.5L328.4 56L327 58.6L325.6 56L324.4 58.5L323.2 55.8L322.2 58.2L321.2 55.8L320.5 53.8Z" fill="#0a0aff" stroke="none" stroke-width="1" />
<line x1="321.2" y1="50.4" x2="333.4" y2="50.4" stroke="#10c010" stroke-width="1" />
<path d="M352.6 49.4V56H357" fill="none" stroke="#f00808" stroke-width="2.2" />
<path d="M367.2 55.3L371.8 52.2V54.2H378.59999999999997V56.4H371.8V58.4Z" fill="#f00808" stroke="none" stroke-width="1" />
<line x1="372" y1="56.9" x2="378.6" y2="56.9" stroke="#400000" stroke-width="0.8" />
<path d="M372.7 48.4V51.8H375.2" fill="none" stroke="#f00808" stroke-width="1.5" />
<path d="M398.1 55.3L393.5 52.2V54.2H386.6V56.4H393.5V58.4Z" fill="#f00808" stroke="none" stroke-width="1" />
<line x1="386.6" y1="56.9" x2="393.3" y2="56.9" stroke="#400000" stroke-width="0.8" />
<path d="M390.3 48.4V51.8H392.8" fill="none" stroke="#f00808" stroke-width="1.5" />
<path d="M405.2 52.7L406 50.5L406.8 52.1L407.6 49.9L408.6 51.5L409.4 50.7L412 50.9L414.6 50.7L415.4 51.5L416.4 49.9L417.2 52.1L418 50.5L418.8 52.7L418.8 53.5L418 55.7L417.2 54.1L416.4 56.3L415.4 54.7L414.6 55.5L412 55.3L409.4 55.5L408.6 54.7L407.6 56.3L406.8 54.1L406 55.7L405.2 53.5Z" fill="#180000" stroke="none" stroke-width="1" />
<path d="M407.8 52.6L409 49.7L410.2 50.5L411 48.9L412 48L413 48.9L413.8 50.5L415 49.7L416.2 52.6L416.2 53.6L415 56.5L413.8 55.7L413 57.3L412 58.2L411 57.3L410.2 55.7L409 56.5L407.8 53.6Z" fill="#f00808" stroke="none" stroke-width="1" />
<line x1="409" y1="47.6" x2="409" y2="58.6" stroke="#202020" stroke-width="1.3" />
<line x1="415" y1="47.6" x2="415" y2="58.6" stroke="#202020" stroke-width="1.3" />
<g transform="translate(426.9 47.4)">
<ellipse cx="4.7" cy="3.6" rx="3.3" ry="3.4" fill="#98980a" stroke="#121200" stroke-width="1"/>
<ellipse cx="4.7" cy="3.7" rx="1.25" ry="1.5" fill="#e4e4f0" stroke="#3a3a00" stroke-width="0.5"/>
<rect x="0.6" y="5.3" width="8.2" height="5.4" fill="#a8a806" stroke="#101000" stroke-width="1.15" rx="1"/>
<line x1="1.6" y1="7" x2="7.8" y2="7" stroke="#dcdc48" stroke-width="0.8" />
<line x1="1.6" y1="9" x2="7.8" y2="9" stroke="#747400" stroke-width="0.8" />
</g>
<g transform="translate(447.2 48.2)">
<path d="M1.1 2.6H7.1L6.6 9.9H1.6Z" fill="#d4d4d4" stroke="#080808" stroke-width="1.1" />
<path d="M0.4 2.5Q0.4 1.1 4.1 1.1Q7.8 1.1 7.8 2.5Q7.8 3.4 4.1 3.4Q0.4 3.4 0.4 2.5Z" fill="#e8e8e8" stroke="#101010" stroke-width="1" />
<path d="M3 1.1Q4.1 0 5.2 1.1" fill="none" stroke="#1a1a1a" stroke-width="0.8" />
<line x1="2.7" y1="4" x2="2.7" y2="9.4" stroke="#484848" stroke-width="0.7" />
<line x1="4.1" y1="4" x2="4.1" y2="9.4" stroke="#484848" stroke-width="0.7" />
<line x1="5.5" y1="4" x2="5.5" y2="9.4" stroke="#484848" stroke-width="0.7" />
</g>
<path d="M470.6 50L471.4 47.7L472.6 49L473.6 48.1L475 50L476.4 51.4L477.4 52L478.6 51L480 49.6L481.2 48.3L482.4 49.4L483.4 50.6L484.3 52.2L484.3 53.8L483.4 55.4L482.4 56.6L481.2 57.7L480 56.4L478.6 55L477.4 54L476.4 54.6L475 56L473.6 57.9L472.6 57L471.4 58.3L470.6 56Z" fill="#0a0aff" stroke="none" stroke-width="1" />
<line x1="477.4" y1="47.6" x2="477.4" y2="59" stroke="#000" stroke-width="1.2" />
<path d="M475.4 49L477.4 46.6L479.4 49M475.4 57.6L477.4 60L479.4 57.6" fill="none" stroke="#000" stroke-width="1.1" />
<line x1="497" y1="47.2" x2="497" y2="59" stroke="#6c6458" stroke-width="1.4" />
<path d="M489.59999999999997 49.400000000000006H492.2V48.220000000000006L495.0 50.2L492.2 52.18V51.0H489.59999999999997Z" fill="#0a0aff" stroke="none" stroke-width="1" />
<path d="M489.59999999999997 54.800000000000004H492.2V53.620000000000005L495.0 55.6L492.2 57.58V56.4H489.59999999999997Z" fill="#0a0aff" stroke="none" stroke-width="1" />
<path d="M497.20000000000005 49.400000000000006H494.6V48.220000000000006L491.8 50.2L494.6 52.18V51.0H497.20000000000005Z" fill="#0a0aff" stroke="none" stroke-width="1" />
<path d="M497.20000000000005 54.800000000000004H494.6V53.620000000000005L491.8 55.6L494.6 57.58V56.4H497.20000000000005Z" fill="#0a0aff" stroke="none" stroke-width="1" />
<path d="M498.0 52.1H500.6V50.48L503.40000000000003 52.9L500.6 55.32V53.699999999999996H498.0Z" fill="#0a0aff" stroke="none" stroke-width="1" />
<path d="M498 51.2V54.6L500 52.9Z" fill="#0a0aff" stroke="none" stroke-width="1" />
<line x1="516.3" y1="47.2" x2="516.3" y2="59" stroke="#6c6458" stroke-width="1.4" />
<path d="M518.4 49.400000000000006H521V48.220000000000006L523.8 50.2L521 52.18V51.0H518.4Z" fill="#0a0aff" stroke="none" stroke-width="1" />
<path d="M518.4 54.800000000000004H521V53.620000000000005L523.8 55.6L521 57.58V56.4H518.4Z" fill="#0a0aff" stroke="none" stroke-width="1" />
<path d="M521.4 49.400000000000006H518.8V48.220000000000006L516.0 50.2L518.8 52.18V51.0H521.4Z" fill="#0a0aff" stroke="none" stroke-width="1" />
<path d="M521.4 54.800000000000004H518.8V53.620000000000005L516.0 55.6L518.8 57.58V56.4H521.4Z" fill="#0a0aff" stroke="none" stroke-width="1" />
<path d="M515.2 52.1H512.6V50.48L509.8 52.9L512.6 55.32V53.699999999999996H515.2Z" fill="#0a0aff" stroke="none" stroke-width="1" />
<path d="M515.3 51.2V54.6L513.3 52.9Z" fill="#0a0aff" stroke="none" stroke-width="1" />
<path d="M527.9 49.4L531 52.9L527.9 56.6Z" fill="#0a0aff" stroke="none" stroke-width="1" />
<line x1="531" y1="52.9" x2="538" y2="52.9" stroke="#0a0aff" stroke-width="1.6" />
<path d="M538 49.2H540.6L542 50.4V55.6L540.6 56.8H538Z" fill="#0a0aff" stroke="none" stroke-width="1" />
<line x1="531" y1="46.8" x2="531" y2="59.2" stroke="#1a1a1a" stroke-width="1.2" />
<line x1="537.9" y1="46.8" x2="537.9" y2="59.2" stroke="#1a1a1a" stroke-width="1.2" />
<path d="M558.2 47.6Q556.6 52 549 53.1Q556.6 54.2 558.2 58.7Z" fill="#0a0aff" stroke="none" stroke-width="1" />
<path d="M569.3 47.6Q570.8 52 578.4 53.1Q570.8 54.2 569.3 58.7Z" fill="#0a0aff" stroke="none" stroke-width="1" />
<circle cx="15.8" cy="73.1" r="3.85" fill="#fa1010" stroke="none" stroke-width="1"/>
<rect x="31.7" y="69.5" width="2.6" height="9" fill="#0c9410" stroke="#080808" stroke-width="0.9" />
<rect x="32" y="69.8" width="2" height="2.2" fill="#e02010" stroke="none" stroke-width="1" />
<rect x="32" y="72" width="2" height="1.8" fill="#e8c020" stroke="none" stroke-width="1" />
<rect x="36.1" y="69.5" width="2.6" height="9" fill="#0c9410" stroke="#080808" stroke-width="0.9" />
<rect x="36.4" y="69.8" width="2" height="2.2" fill="#e02010" stroke="none" stroke-width="1" />
<rect x="36.4" y="72" width="2" height="1.8" fill="#e8c020" stroke="none" stroke-width="1" />
<line x1="54" y1="70" x2="54" y2="76.6" stroke="#3c3c3c" stroke-width="1.5" />
<path d="M56.7 69.8L64 73.2L56.7 76.6Z" fill="#000" stroke="none" stroke-width="1" />
<path d="M79.3 69.4L87.5 73.1L79.3 76.8Z" fill="#000" stroke="none" stroke-width="1" />
<line x1="100.3" y1="69.9" x2="100.3" y2="76.8" stroke="#000" stroke-width="1.7" />
<line x1="105.5" y1="69.9" x2="105.5" y2="76.8" stroke="#000" stroke-width="1.7" />
<rect x="118" y="69.6" width="8.6" height="7.5" fill="#000" stroke="none" stroke-width="1" />
<line x1="137.7" y1="69.8" x2="137.7" y2="76.6" stroke="#000" stroke-width="1.5" />
<path d="M147 69.6L139.6 73.1L147 76.6Z" fill="#000" stroke="none" stroke-width="1" />
<path d="M161.2 69.6L155.8 73.1L161.2 76.6ZM166.2 69.6L160.8 73.1L166.2 76.6Z" fill="#000" stroke="none" stroke-width="1" />
<path d="M174.8 69.6L180.2 73.1L174.8 76.6ZM179.8 69.6L185.2 73.1L179.8 76.6Z" fill="#000" stroke="none" stroke-width="1" />
<path d="M194.2 69.6L201.4 73.1L194.2 76.6Z" fill="#000" stroke="none" stroke-width="1" />
<line x1="203.2" y1="69.8" x2="203.2" y2="76.6" stroke="#000" stroke-width="1.5" />
<path d="M219.6 73.4Q219.2 70.8 222.6 70.8H226" fill="none" stroke="#111" stroke-width="1.2" />
<path d="M227.8 72.8Q228.2 75.4 224.8 75.4H221.4" fill="none" stroke="#111" stroke-width="1.2" />
<path d="M225.6 69.4L228.2 71.2L225.6 72.4Z" fill="#111" stroke="none" stroke-width="1" />
<path d="M221.8 73.8L219.2 75.1L221.8 76.8Z" fill="#111" stroke="none" stroke-width="1" />
<path d="M243.9 68.2V78.2" fill="none" stroke="#0a0aff" stroke-width="1.2" />
<path d="M244.4 70.2L248.8 73.3L244.4 76.4Z" fill="#0a0aff" stroke="none" stroke-width="1" />
<path d="M250.5 69.4H254.2L256.8 72V77.9H250.5Z" fill="#d4d4d4" stroke="#111" stroke-width="1.2" />
<line x1="252" y1="72.6" x2="255" y2="72.6" stroke="#555" stroke-width="0.8" />
<line x1="252" y1="74.2" x2="255" y2="74.2" stroke="#555" stroke-width="0.8" />
<line x1="252" y1="75.8" x2="255" y2="75.8" stroke="#555" stroke-width="0.8" />
<path d="M264.3 69.4V76.5H276.4" fill="none" stroke="#111" stroke-width="1.1" />
<path d="M265.4 73.4L267 70.6L268.6 73L270.2 71.4L272 73.6L274 72.2L276.4 71.4" fill="none" stroke="#f01010" stroke-width="1" />
<rect x="283.4" y="68.6" width="7" height="6.8" fill="none" stroke="#f00808" stroke-width="1.2" rx="1.2"/>
<rect x="286.6" y="71.4" width="7.2" height="6.8" fill="none" stroke="#f00808" stroke-width="1.2" rx="1.2"/>
<path d="M284 75.4L286.6 78M290.4 75.4L292 77" fill="none" stroke="#f00808" stroke-width="0.9" />
<path d="M301 73L301.5 70.9L302 71.9L302.6 70.1L303.2 71.3L303.8 70.5L304.4 71.5L305.2 71.1L306 72.2L306.8 72.6L307.6 72.1L308.4 72.3L309.2 71.3L310 71.9L310.8 70.5L311.6 71.5L312.4 69.7L313.2 70.9L313.8 70.1L314.6 71.9L315.4 73L315.4 73.6L314.6 74.7L313.8 76.5L313.2 75.7L312.4 76.9L311.6 75.1L310.8 76.1L310 74.7L309.2 75.3L308.4 74.3L307.6 74.5L306.8 74L306 74.4L305.2 75.5L304.4 75.1L303.8 76.1L303.2 75.3L302.6 76.5L302 74.7L301.5 75.7L301 73.6Z" fill="#0a0aff" stroke="none" stroke-width="1" />
<line x1="303.4" y1="67.6" x2="303.4" y2="79" stroke="#2a2a40" stroke-width="1.2" />
<line x1="307.9" y1="67.6" x2="307.9" y2="79" stroke="#2a2a40" stroke-width="1.2" />
<line x1="311.9" y1="67.6" x2="311.9" y2="79" stroke="#2a2a40" stroke-width="1.2" />
<path d="M303.4 67.8H304.8M307.9 67.8H309.3M311.9 67.8H313.3" fill="none" stroke="#2a2a40" stroke-width="0.9" />
<line x1="320.6" y1="69.2" x2="328" y2="69.2" stroke="#0a0aff" stroke-width="1.2" />
<line x1="320.6" y1="78.2" x2="334" y2="78.2" stroke="#0a0aff" stroke-width="1.2" />
<path d="M327.6 69.2L329.6 67.6L331.4 71.6L332.6 69.2H334" fill="none" stroke="#0a0aff" stroke-width="1.1" />
<line x1="328" y1="71.4" x2="328" y2="76" stroke="#222" stroke-width="1.2" />
<path d="M325.8 74.2L328 76.8L330.2 74.2Z" fill="#222" stroke="none" stroke-width="1" />
<path d="M341.4 67.8V72.39999999999999H352.8" fill="none" stroke="#1a1a1a" stroke-width="0.9" />
<path d="M342.6 71.39999999999999L344.2 68.2L345.4 71.0L347.6 68.2L348.8 70.8L351 68.2L352.6 69.39999999999999" fill="none" stroke="#08a808" stroke-width="1.25" />
<path d="M341.4 74.4V79.0H352.8" fill="none" stroke="#1a1a1a" stroke-width="0.9" />
<path d="M342.6 78.0L344.2 74.80000000000001L345.4 77.60000000000001L347.6 74.80000000000001L348.8 77.4L351 74.80000000000001L352.6 76.0" fill="none" stroke="#08a808" stroke-width="1.25" />
<path d="M362.4 76.4L370.2 68L372.6 70.2L364.8 78.4Z" fill="#f4f4f4" stroke="#0a0a0a" stroke-width="1.35" />
<path d="M370.2 68L371.4 66.8L373.8 69L372.6 70.2Z" fill="#e02020" stroke="#111" stroke-width="0.7" />
<path d="M362.4 76.4L361.6 79L364.8 78.4Z" fill="#111" stroke="none" stroke-width="1" />
<path d="M359.2 75.6L361 77.8M365.6 78.6L368.4 76.4L370 77.4L372.8 74.6" fill="none" stroke="#0a0aff" stroke-width="1.1" />
<text x="387.7" y="76.7" font-size="10.2" fill="#0a0aff" font-weight="bold" textLength="9.4" lengthAdjust="spacingAndGlyphs" stroke="#0a0aff" stroke-width=".7">M</text>
<path d="M406.2 75.4L410.59999999999997 72.6V74.4H417.4V76.4H410.59999999999997V78.4Z" fill="#0a0aff" stroke="none" stroke-width="1" />
<line x1="410.8" y1="76.9" x2="417.4" y2="76.9" stroke="#000040" stroke-width="0.7" />
<path d="M410.9 72.7V69.6L412.8 70.9L414.7 69.6V72.7" fill="none" stroke="#0a0aff" stroke-width="1.25" stroke-linejoin="miter"/>
<path d="M436.59999999999997 75.4L432.2 72.6V74.4H425.2V76.4H432.2V78.4Z" fill="#0a0aff" stroke="none" stroke-width="1" />
<line x1="425.2" y1="76.9" x2="432" y2="76.9" stroke="#000040" stroke-width="0.7" />
<path d="M428.2 72.7V69.6L430.09999999999997 70.9L432.0 69.6V72.7" fill="none" stroke="#0a0aff" stroke-width="1.25" stroke-linejoin="miter"/>
<path d="M443.7 69L446.4 73L443.7 77.4Z" fill="#0a0aff" stroke="none" stroke-width="1" />
<rect x="446.2" y="67.2" width="9.6" height="12" fill="#000" stroke="none" stroke-width="1" />
<line x1="446.5" y1="67.2" x2="446.5" y2="79.2" stroke="#20d020" stroke-width="0.9" />
<line x1="455.5" y1="67.2" x2="455.5" y2="79.2" stroke="#20d020" stroke-width="0.9" />
<path d="M447.2 72.7L448.4 70.9L449.6 72.1L451 70.4L452.4 72.1L453.6 70.9L454.8 72.7L454.8 73.5L453.6 75.3L452.4 74.1L451 75.8L449.6 74.1L448.4 75.3L447.2 73.5Z" fill="#0a0aff" stroke="none" stroke-width="1" />
<path d="M456 71.4L457.8 73.1L456 75Z" fill="#0a0aff" stroke="none" stroke-width="1" />
<g transform="translate(465.5 67.6)">
<ellipse cx="4.7" cy="3.6" rx="3.3" ry="3.4" fill="#98980a" stroke="#121200" stroke-width="1"/>
<ellipse cx="4.7" cy="3.7" rx="1.25" ry="1.5" fill="#e4e4f0" stroke="#3a3a00" stroke-width="0.5"/>
<rect x="0.6" y="5.3" width="8.2" height="5.4" fill="#a8a806" stroke="#101000" stroke-width="1.15" rx="1"/>
<line x1="1.6" y1="7" x2="7.8" y2="7" stroke="#dcdc48" stroke-width="0.8" />
<line x1="1.6" y1="9" x2="7.8" y2="9" stroke="#747400" stroke-width="0.8" />
</g>
<g transform="translate(485.6 68.6)">
<path d="M1.1 2.6H7.1L6.6 9.9H1.6Z" fill="#d4d4d4" stroke="#080808" stroke-width="1.1" />
<path d="M0.4 2.5Q0.4 1.1 4.1 1.1Q7.8 1.1 7.8 2.5Q7.8 3.4 4.1 3.4Q0.4 3.4 0.4 2.5Z" fill="#e8e8e8" stroke="#101010" stroke-width="1" />
<path d="M3 1.1Q4.1 0 5.2 1.1" fill="none" stroke="#1a1a1a" stroke-width="0.8" />
<line x1="2.7" y1="4" x2="2.7" y2="9.4" stroke="#484848" stroke-width="0.7" />
<line x1="4.1" y1="4" x2="4.1" y2="9.4" stroke="#484848" stroke-width="0.7" />
<line x1="5.5" y1="4" x2="5.5" y2="9.4" stroke="#484848" stroke-width="0.7" />
</g>
<path d="M208.9 89.4L212.1 96.3L216.5 92.1L220.2 96.9" fill="none" stroke="#2828f0" stroke-width="0.85" />
<circle cx="208.9" cy="89.4" r="1.25" fill="#000c0c" stroke="none" stroke-width="1"/>
<circle cx="212.1" cy="96.3" r="1.25" fill="#000c0c" stroke="none" stroke-width="1"/>
<circle cx="216.5" cy="92.1" r="1.25" fill="#000c0c" stroke="none" stroke-width="1"/>
<circle cx="220.2" cy="96.9" r="1.25" fill="#000c0c" stroke="none" stroke-width="1"/>
<path d="M229.2 93L232.4 96.2L238 90.6" fill="none" stroke="#8e8e8e" stroke-width="1.9" />
<line x1="246.4" y1="93.3" x2="258.8" y2="93.3" stroke="#9a9a9a" stroke-width="1" />
<circle cx="247.2" cy="93.3" r="1.2" fill="#8e8e8e" stroke="none" stroke-width="1"/>
<circle cx="252.6" cy="93.3" r="1.2" fill="#8e8e8e" stroke="none" stroke-width="1"/>
<circle cx="258" cy="93.3" r="1.2" fill="#8e8e8e" stroke="none" stroke-width="1"/>
<line x1="272" y1="90.2" x2="272" y2="96" stroke="#b0b0b0" stroke-width="1" />
<path d="M270 91.4L272 89.2L274 91.4M270 94.6L272 96.8L274 94.6" fill="none" stroke="#b0b0b0" stroke-width="1" />
<path d="M286.4 88.8L296.2 98.6M296.2 88.8L286.4 98.6" fill="none" stroke="#8a8a8a" stroke-width="2.1" />
<rect x="305.6" y="88.6" width="11.4" height="11" fill="#fff" stroke="#202088" stroke-width="1.5" rx="1.6"/>
<path d="M308.8 90.6L314 94.2L308.8 97.8Z" fill="#087838" stroke="none" stroke-width="1" />
<g transform="translate(325.8 87.9)">
<ellipse cx="4.7" cy="3.6" rx="3.3" ry="3.4" fill="#98980a" stroke="#121200" stroke-width="1"/>
<ellipse cx="4.7" cy="3.7" rx="1.25" ry="1.5" fill="#e4e4f0" stroke="#3a3a00" stroke-width="0.5"/>
<rect x="0.6" y="5.3" width="8.2" height="5.4" fill="#a8a806" stroke="#101000" stroke-width="1.15" rx="1"/>
<line x1="1.6" y1="7" x2="7.8" y2="7" stroke="#dcdc48" stroke-width="0.8" />
<line x1="1.6" y1="9" x2="7.8" y2="9" stroke="#747400" stroke-width="0.8" />
</g>
<line x1="16.38" y1="406.12" x2="11.4" y2="410.3" stroke="#111" stroke-width="1.9" />
<circle cx="18.9" cy="403.6" r="3.6" fill="#fff" stroke="#111" stroke-width="1.1"/>
<line x1="16.7" y1="403.6" x2="21.1" y2="403.6" stroke="#111" stroke-width="1.2" />
<line x1="18.9" y1="401.4" x2="18.9" y2="405.8" stroke="#111" stroke-width="1.2" />
<line x1="35.28" y1="406.12" x2="30.5" y2="410.3" stroke="#111" stroke-width="1.9" />
<circle cx="37.8" cy="403.6" r="3.6" fill="#fff" stroke="#111" stroke-width="1.1"/>
<line x1="35.6" y1="403.6" x2="40" y2="403.6" stroke="#111" stroke-width="1.2" />
<line x1="59.84" y1="406.36" x2="55.2" y2="410.2" stroke="#111" stroke-width="1.9" />
<circle cx="62.5" cy="403.7" r="3.8" fill="#fff" stroke="#111" stroke-width="1.1"/>
<path d="M60.7 402.3Q61.9 400.9 63.5 401.09999999999997" fill="none" stroke="#5050ff" stroke-width="1.1" />
<line x1="59.6" y1="410.8" x2="66" y2="410.8" stroke="#111" stroke-width="1.1" />
<path d="M61 409.2L59.2 410.8L61 412.4ZM64.6 409.2L66.4 410.8L64.6 412.4Z" fill="#111" stroke="none" stroke-width="1" />
<line x1="84.14" y1="406.36" x2="79.2" y2="410.4" stroke="#111" stroke-width="1.9" />
<circle cx="86.8" cy="403.7" r="3.8" fill="#fff" stroke="#111" stroke-width="1.1"/>
<path d="M85.0 402.3Q86.2 400.9 87.8 401.09999999999997" fill="none" stroke="#5050ff" stroke-width="1.1" />
<line x1="86.4" y1="410.5" x2="90" y2="410.5" stroke="#111" stroke-width="1" />
<line x1="88.2" y1="408.7" x2="88.2" y2="412.3" stroke="#111" stroke-width="1" />
<line x1="103.54" y1="406.36" x2="98.5" y2="410.4" stroke="#111" stroke-width="1.9" />
<circle cx="106.2" cy="403.7" r="3.8" fill="#fff" stroke="#111" stroke-width="1.1"/>
<path d="M104.4 402.3Q105.60000000000001 400.9 107.2 401.09999999999997" fill="none" stroke="#5050ff" stroke-width="1.1" />
<line x1="105.8" y1="410.5" x2="109.4" y2="410.5" stroke="#111" stroke-width="1" />
<text x="123.4" y="405.3" font-size="6.4" fill="#111" font-weight="bold" textLength="7.4" lengthAdjust="spacingAndGlyphs" >x2</text>
<line x1="122" y1="408.6" x2="132.2" y2="408.6" stroke="#111" stroke-width="1.1" />
<path d="M123.6 406.8L121 408.6L123.6 410.4ZM130.4 406.8L133 408.6L130.4 410.4Z" fill="#111" stroke="none" stroke-width="1" />
<path d="M123.8 405.8L122.4 407.4M130.8 405.8L132 407.4" fill="none" stroke="#333" stroke-width="0.8" />
<text x="146" y="405.3" font-size="6.4" fill="#111" font-weight="bold" textLength="5.6" lengthAdjust="spacingAndGlyphs" >/2</text>
<line x1="141.8" y1="408.6" x2="151.6" y2="408.6" stroke="#111" stroke-width="1.1" />
<path d="M143.6 406.8L146.2 408.6L143.6 410.4ZM150 406.8L147.4 408.6L150 410.4Z" fill="#111" stroke="none" stroke-width="1" />
<line x1="146.8" y1="406" x2="146.8" y2="411" stroke="#111" stroke-width="0.9" />
<path d="M144.6 402.4L142.6 405.6" fill="none" stroke="#333" stroke-width="0.8" />
<rect x="0" y="26" width="1" height="408" fill="#744da9" />
<rect x="669" y="26" width="1" height="408" fill="#744da9" />
<rect x="0" y="433" width="670" height="1" fill="#744da9" />
</svg>
</body></html>
